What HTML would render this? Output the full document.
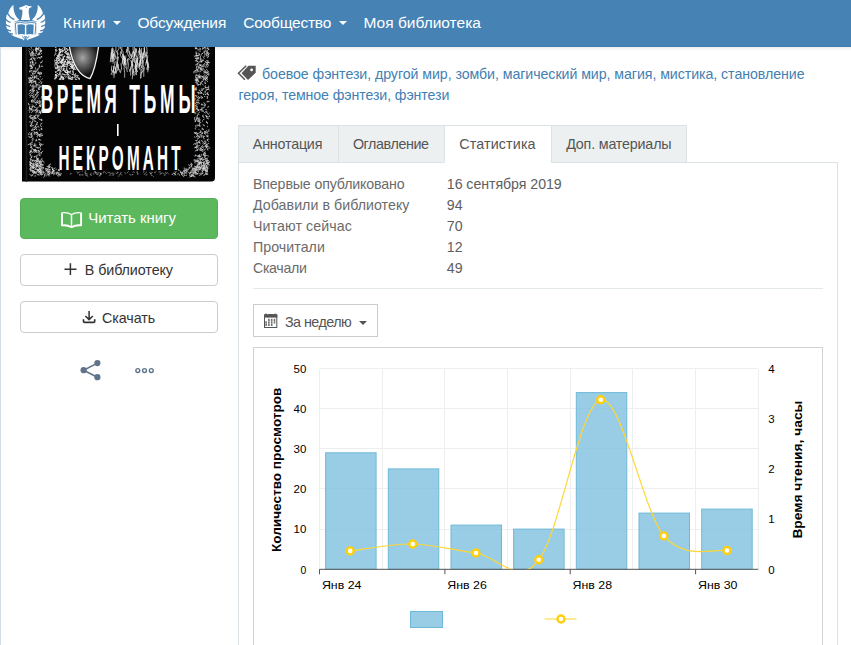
<!DOCTYPE html>
<html lang="ru">
<head>
<meta charset="utf-8">
<title>Статистика</title>
<style>
*{box-sizing:border-box;margin:0;padding:0}
html,body{width:851px;height:645px;overflow:hidden;background:#fff}
body{font-family:"Liberation Sans",sans-serif;font-size:14px;color:#555;position:relative}
.abs{position:absolute}
.t{position:absolute;white-space:nowrap;line-height:1}
#nav{left:0;top:0;width:851px;height:47px;background:#4682b4;border-bottom:1px solid #437dae}
#navsh{left:0;top:47px;width:851px;height:4px;background:linear-gradient(#efefef,#fff)}
#nav .t{color:#fff}
.caret{position:absolute;width:0;height:0;border-left:4px solid transparent;border-right:4px solid transparent;border-top:4px solid #fff}
#lborder{left:0;top:47px;width:1px;height:598px;background:#d5dde8}
.btn{position:absolute;left:20px;width:198px;border-radius:4px}
#read{top:198px;height:41px;background:#5cb85c;border:1px solid #54ad54}
#lib{top:254px;height:32px;background:#fff;border:1px solid #ccc}
#dl{top:301px;height:32px;background:#fff;border:1px solid #ccc}
.tab{position:absolute;top:125px;height:38px;background:#ecf0f1;border:1px solid #dce3e6;border-right:none}
.tab.act{background:#fff;border-bottom:1px solid #fff;border-right:1px solid #dce3e6}
#panel{left:238px;top:162px;width:600px;height:500px;border:1px solid #dce3e6;border-bottom:none}
#hr{left:253px;top:288px;width:570px;height:1px;background:#e3e8ea}
#period{left:253px;top:304px;width:125px;height:33px;border:1px solid #ccc;background:#fff}
#chartbox{left:253px;top:347px;width:570px;height:320px;border:1px solid #d3d3d3;background:#fff}
svg{position:absolute;overflow:visible}
svg text{font-family:"Liberation Sans",sans-serif}
</style>
</head>
<body>

<div id="nav" class="abs">
<svg class="abs" style="left:0;top:0" width="56" height="47" viewBox="0 0 56 47">
<g><path d="M13.5 4.8 C10.4 7.4 8.6 10.8 8.2 14 L6.9 14.4 C6.2 16.2 6 18 6.3 19.6 C5.8 21.2 5.8 23 6.2 24.6 C6 26.4 6.6 28.2 7.5 29.5 C7.9 31.2 8.9 32.6 10.2 33.4 C11.6 35.200000000000001 14 36.4 16 37 C18 37.8 20.5 38.6 22.5 39.2 L24.3 36 L15 34 L14.2 21.8 L19.4 19.9 C15.2 16.600000000000001 13 10.8 13.5 4.8Z" fill="#fff"/><path d="M7.6 13.6 Q10 17.8 14.4 19.6 M5.8 19.4 Q7.8 21.7 10.6 22.5 M5.6 24.6 Q7.6 26.1 10.1 26.6 M6.8 29.5 Q8.6 30.6 11 30.9 M9.4 33.3 Q11 34 12.9 34" stroke="#4682b4" stroke-width="1.3" fill="none" stroke-linecap="butt"/></g>
<g transform="translate(51.2 0) scale(-1 1)"><path d="M13.5 4.8 C10.4 7.4 8.6 10.8 8.2 14 L6.9 14.4 C6.2 16.2 6 18 6.3 19.6 C5.8 21.2 5.8 23 6.2 24.6 C6 26.4 6.6 28.2 7.5 29.5 C7.9 31.2 8.9 32.6 10.2 33.4 C11.6 35.200000000000001 14 36.4 16 37 C18 37.8 20.5 38.6 22.5 39.2 L24.3 36 L15 34 L14.2 21.8 L19.4 19.9 C15.2 16.600000000000001 13 10.8 13.5 4.8Z" fill="#fff"/><path d="M7.6 13.6 Q10 17.8 14.4 19.6 M5.8 19.4 Q7.8 21.7 10.6 22.5 M5.6 24.6 Q7.6 26.1 10.1 26.6 M6.8 29.5 Q8.6 30.6 11 30.9 M9.4 33.3 Q11 34 12.9 34" stroke="#4682b4" stroke-width="1.3" fill="none" stroke-linecap="butt"/></g>
<path d="M19 7.7 L23.3 6.3 L26 5 L28.6 6 L32.3 6.600000000000001 L29 8.6 C28.2 12 29 16 30.2 20 L21 20 C22.2 16 22.9 12 22.2 9.7 L19.8 9.5Z" fill="#fff"/>
<circle cx="26.3" cy="7.2" r="0.55" fill="#4682b4"/>
<path d="M14 21.9 Q20 20.6 25.6 21.8 Q31.2 20.6 37.2 21.9 L36.2 35.8 Q30.5 34.8 25.6 36.4 Q20.7 34.8 15 35.8Z" fill="#fff"/>
<path d="M15.3 23 Q20.5 21.9 25.6 23.1 Q30.7 21.9 35.9 23 L35.1 34.6 M16.1 34.6 L15.3 23" stroke="#4682b4" stroke-width="0.9" fill="none"/>
<path d="M17.5 24.8 Q21.5 23.8 24.9 24.9 V34.6 Q21.3 33.6 17.9 34.5Z M33.7 24.8 Q29.7 23.8 26.3 24.9 V34.6 Q29.9 33.6 33.3 34.5Z" fill="#4682b4"/>
<path d="M20.5 35 Q23.6 35.6 25.6 38.4 Q27.6 35.6 30.7 35 L31.2 36.8 Q28.4 37.8 27.8 40.6 Q26.4 38.6 25.6 38.6 Q24.8 38.6 23.4 40.6 Q22.8 37.8 20 36.8Z" fill="#fff"/>
<path d="M22.3 36.6 Q24.2 37.3 24.6 39 M28.9 36.6 Q27 37.3 26.6 39" stroke="#4682b4" stroke-width="0.9" fill="none" stroke-linecap="round"/>
</svg>
<span class="t" style="left:63px;top:15px;font-size:15.5px;letter-spacing:0.435px;">Книги</span>
<i class="caret" style="left:113px;top:21px"></i>
<span class="t" style="left:137.4px;top:15px;font-size:15.5px;letter-spacing:-0.131px;">Обсуждения</span>
<span class="t" style="left:243.2px;top:15px;font-size:15.5px;letter-spacing:-0.216px;">Сообщество</span>
<i class="caret" style="left:339px;top:21px"></i>
<span class="t" style="left:363.5px;top:15px;font-size:15.5px;letter-spacing:0.001px;">Моя библиотека</span>
</div>
<div id="navsh" class="abs"></div><div id="lborder" class="abs"></div>
<svg class="abs" style="left:0;top:0" width="851" height="645" viewBox="0 0 851 645">
<clipPath id="cc"><path d="M22 47h193v130.7q0 4 -4 4h-189z"/></clipPath>
<g clip-path="url(#cc)"><rect x="22" y="47" width="193" height="134.7" fill="#040404"/>
<rect x="25.6" y="46" width="1.8" height="136" fill="#1d1d1d"/>
<path d="M33.5 65.9q0.1 -0.5 0.6 -1.7M30.2 110.4q-1.7 -1.6 -1.9 -0.3M34.8 150.4q0.5 1.8 -1.5 -1.1M36.7 96.6q1.4 -0.8 1.9 -1.8M31.3 61.7q-1.3 0.3 -0.8 1.3M37.5 93.5q-1.8 -1.2 0.2 -1.7M38.0 100.4q-0.2 -0.8 -0.7 0.3M39.4 134.4q0.1 1.5 -1.0 0.3M38.6 83.0q-0.3 1.0 1.9 -1.5M31.4 108.1q1.1 0.3 -1.8 0.7M40.4 86.2q0.3 -0.2 0.8 0.4M40.0 165.1q-1.8 0.8 -0.1 0.7M37.6 171.1q-0.5 0.7 1.3 -0.9M29.8 104.7q-1.8 1.1 -1.3 -1.5M31.1 78.0q-1.7 -0.2 -0.4 1.5M36.4 157.4q-0.9 -0.3 1.3 1.5M34.0 157.5q-1.3 -1.1 1.8 -1.4M32.4 107.6q-2.0 -0.3 0.4 -0.9M34.1 117.8q0.1 0.5 1.8 0.8M38.0 53.7q1.5 1.2 1.6 1.1M34.4 96.9q-1.8 -1.7 -1.6 0.5M32.1 67.3q-2.0 -1.4 -0.6 -1.8M30.8 92.5q0.5 -1.4 -1.9 1.5M32.7 90.4q1.4 2.0 -0.5 -1.5M35.3 107.5q-0.6 -0.9 -1.7 -1.6M39.9 67.2q0.1 -1.4 -1.9 1.8M36.3 50.4q1.5 0.8 0.1 1.9M32.8 92.8q0.1 1.1 -1.3 1.1M33.6 74.9q1.4 1.2 1.2 1.9M39.7 139.5q-0.6 -1.9 -1.1 0.1M29.8 81.9q1.8 -0.2 -1.0 0.8M41.2 170.5q-1.1 -1.1 1.8 -0.5M32.0 72.5q1.4 -0.1 0.5 1.6M37.7 147.0q1.6 1.1 -1.7 0.6M38.9 106.8q-0.7 1.2 -1.3 1.2M41.6 96.5q0.9 -1.3 -0.4 1.8M31.1 65.9q-1.4 1.3 1.6 1.2M41.8 129.2q-1.5 -1.9 -0.6 0.2M41.6 128.2q-0.3 1.5 0.1 1.7M39.8 73.4q-1.0 0.3 -1.0 -0.8M32.7 99.4q-0.6 -0.2 -1.5 1.6M36.8 160.0q0.0 0.1 -0.3 1.7M36.0 49.3q-2.0 1.2 -0.2 -1.3M31.7 106.2q-0.7 0.1 0.9 0.2M36.4 145.0q-1.0 -0.9 -1.6 0.2M39.2 110.5q1.6 -0.2 0.2 1.0M37.2 110.2q-0.2 0.1 0.0 0.8M35.5 164.7q1.8 -1.0 0.8 1.5M36.5 164.9q-1.5 -0.2 1.4 -1.5M30.4 77.1q1.1 1.6 -1.7 0.7M31.4 136.5q1.5 1.9 0.6 -1.4M32.2 166.1q2.0 1.3 -0.4 -0.1M31.5 100.9q-1.2 -0.7 0.1 -0.6M38.5 49.4q-1.9 -0.7 0.2 -0.2M37.3 111.0q1.2 1.9 -1.7 1.9M30.8 80.2q-0.9 -1.5 -1.8 1.1M34.8 160.9q-1.4 1.7 1.3 -1.0M36.6 134.6q0.8 -0.3 -1.6 -1.8M30.4 164.3q-1.7 1.4 0.5 1.2M30.3 154.8q0.2 1.7 -0.2 -0.6M32.8 63.2q-1.6 -1.4 0.1 -1.0M30.1 72.2q1.0 -0.8 -0.8 -0.8M35.8 69.2q-1.0 -1.9 -0.6 -1.9M38.7 115.9q1.7 -1.6 -1.2 -0.1M39.7 101.0q-0.4 0.0 -0.0 1.3M38.1 169.8q0.8 0.5 -0.6 1.3M34.6 90.4q-1.7 1.0 -1.8 -1.5M32.7 67.4q1.5 0.7 -1.7 1.4M33.0 77.3q-1.4 -0.2 -0.8 -0.2M32.8 167.2q-1.0 1.9 1.9 0.2M33.4 91.6q-0.1 0.0 -2.0 -0.5M32.0 110.1q-1.6 -0.4 -2.0 -0.9M30.0 49.8q0.3 0.1 -0.8 -1.1M38.9 129.2q-0.4 -0.7 0.9 1.5M41.8 65.7q-1.8 1.3 0.9 0.6M40.6 125.4q-1.4 0.1 0.9 1.2M35.8 151.4q0.3 1.6 1.2 1.3M38.0 133.7q-1.5 -0.6 -1.1 -1.9M30.8 151.5q0.5 0.7 0.2 0.5M35.6 47.4q0.0 0.1 1.2 1.0M37.7 55.3q-1.7 -0.9 0.9 -1.0M38.6 72.7q-0.0 -0.5 1.0 1.9M35.5 132.5q0.6 -1.7 1.1 0.5M31.3 78.7q0.3 -2.0 1.0 -0.8M30.3 80.6q0.7 -0.8 0.7 0.8M36.0 105.1q1.6 -1.2 -0.1 -1.5M41.7 164.0q1.3 1.9 -1.9 -0.2M35.1 80.6q-1.2 0.3 -1.2 1.8M31.3 112.5q1.3 0.0 1.8 -1.5M40.6 134.9q-0.1 -1.9 -1.1 1.6M29.5 108.5q-1.4 -0.6 -0.2 -0.8M33.5 152.0q1.4 -1.5 -2.0 1.0M41.1 136.1q-0.5 -0.4 1.6 -0.8M42.0 120.6q-0.9 -1.8 -0.6 -0.3M30.8 151.3q-1.0 -0.9 -0.9 1.7M35.9 70.7q1.5 1.2 -0.5 1.8M37.4 161.2q0.9 -1.8 1.8 0.2M38.7 103.4q-0.9 -1.8 1.0 0.6M41.1 62.9q-0.8 1.0 -0.1 -0.6M41.7 79.5q0.2 -0.4 0.6 -0.8M31.6 67.2q-0.0 -1.1 -1.2 1.6M40.8 171.6q-1.2 -1.6 -0.2 -1.4M33.8 58.4q0.3 1.5 -1.0 -1.0M38.9 98.6q-0.5 -0.6 -0.3 0.1M30.3 81.7q0.0 0.5 1.9 -1.5M40.3 74.0q-0.4 -0.2 -0.9 -1.0M41.4 153.1q-1.9 0.8 1.5 -1.9M40.7 106.2q-0.4 1.7 0.3 -2.0M39.8 153.9q-1.6 -1.4 1.9 -1.0M36.0 132.3q0.6 1.1 1.8 0.9M35.2 115.9q-1.1 1.7 -1.8 1.1M37.6 85.0q0.5 0.8 -1.5 -1.0M30.9 55.8q-0.4 -1.1 0.1 0.3M37.0 48.3q1.8 0.6 -0.8 -0.2M40.5 106.4q1.8 0.8 -1.1 -1.0M33.3 49.7q-0.3 -1.0 -0.0 0.7M37.8 162.6q-0.6 -0.3 -1.1 -1.9M38.0 71.8q0.0 -1.2 1.2 1.0M41.6 86.0q-1.1 1.0 1.3 -1.1M33.2 166.0q-1.1 -0.3 -0.0 -1.3M37.8 165.6q-1.1 1.9 -1.4 -0.4M31.3 53.5q1.6 1.5 -1.8 -0.4M38.7 171.7q-1.3 1.7 1.7 -0.7M38.8 51.0q-0.5 -0.7 0.7 -0.5M31.6 47.4q1.8 -1.5 -0.9 -0.6M41.6 72.9q1.3 -0.3 -0.6 1.3M30.1 106.2q-1.2 -0.5 -0.5 1.7M40.7 50.8q1.1 -1.8 -0.4 1.2M29.9 54.8q1.0 1.6 1.7 -1.0M33.7 81.0q-1.0 0.9 1.8 0.5M33.5 81.5q1.7 0.5 -2.0 1.0M41.3 50.0q1.8 1.8 -1.1 -0.1M34.3 78.4q1.7 -1.3 -0.3 -0.0M39.5 139.3q0.4 -0.7 1.3 1.1M33.5 92.2q-1.2 1.0 1.1 -1.7M32.6 55.1q-0.7 1.9 -1.9 0.2M40.5 170.5q-1.6 -0.0 -0.9 -1.7M38.4 102.9q0.5 0.7 -1.1 -0.3M38.8 152.9q1.4 -0.8 0.7 -1.5M36.6 93.6q-1.0 -1.0 1.0 -1.2M31.4 157.5q-0.4 2.0 0.3 -0.7M35.8 75.9q2.0 -1.6 1.2 0.6M35.4 149.4q-1.8 -0.8 1.4 1.7M31.0 70.7q1.7 -0.5 1.9 0.3M40.3 103.1q1.8 -1.6 -1.0 1.1M37.0 124.5q-1.4 -1.2 -1.1 -0.5M32.7 121.9q-2.0 -0.7 0.6 -1.2M38.0 70.1q1.2 0.2 -0.8 -1.2M30.3 59.7q0.6 -1.6 -0.4 0.2M31.5 133.9q-0.8 1.8 -0.4 -0.9M33.4 117.8q1.5 2.0 -0.6 -0.3M34.0 71.7q-2.0 1.6 0.9 -1.2M34.8 149.5q-0.2 -1.3 -0.4 1.5M29.7 115.9q-1.6 0.5 0.6 1.6M34.1 110.1q0.1 1.7 -1.4 -0.9M30.9 108.3q-1.2 -1.5 1.2 1.9M41.3 168.9q1.7 -0.4 -0.1 -1.8M40.8 124.5q1.1 -1.1 1.3 -1.4M34.6 152.8q-1.1 -0.4 1.3 -1.3M36.0 94.9q0.9 1.6 -1.5 -1.0M30.0 117.3q1.4 -1.5 1.0 -1.8M37.0 115.8q-0.3 0.3 0.5 -0.8M34.8 129.4q-1.9 0.5 -0.2 -0.2M35.6 76.4q-0.2 -1.3 1.1 1.1M35.4 60.4q-1.6 -0.2 -1.5 -0.3M35.9 52.1q0.9 1.1 0.5 -1.7M35.9 53.8q1.8 -1.5 0.0 -0.5M40.2 171.5q-1.2 1.9 0.9 1.3M35.6 166.6q1.2 1.7 1.7 -1.3M30.3 90.9q1.6 -0.9 1.0 -1.4M39.7 64.9q-1.2 -0.9 0.0 1.7M35.8 86.9q-1.4 1.7 -1.9 -1.3M38.0 158.9q-1.5 0.1 -1.3 1.1M37.5 92.0q0.3 1.5 1.5 0.2M30.8 171.1q1.2 -0.9 0.5 -0.4M41.9 119.2q-0.2 -1.3 -0.6 1.1M38.8 53.0q0.6 1.9 1.3 -1.0M36.8 130.0q-1.9 -1.4 -0.7 -2.0M37.2 101.0q-1.5 -1.1 0.1 1.6M37.7 49.8q-1.6 -0.6 -2.0 -0.6M32.3 119.9q0.5 -0.1 0.4 -1.2M31.2 164.1q-1.6 0.6 -1.0 -1.4M40.4 144.8q-2.0 0.6 -0.4 -0.9M36.5 90.8q1.7 0.9 0.6 -0.2M32.6 159.9q-0.4 -1.0 -1.8 0.1M30.2 144.4q1.8 -1.4 -2.0 0.2M32.0 123.0q1.3 -1.3 0.0 0.6M33.4 84.5q1.1 0.9 -1.8 1.6M29.6 152.6q1.0 -0.2 1.0 -0.1M32.3 60.2q-0.7 1.0 -1.1 -1.8M38.2 152.7q0.2 -0.3 0.8 -0.9M39.4 112.4q1.9 -1.1 -0.9 0.6M40.5 48.9q1.0 1.8 -1.0 -1.1M38.8 87.9q-1.0 1.6 1.5 -0.7M37.4 133.6q-0.1 1.4 0.7 1.9M38.2 154.2q0.3 -0.8 -0.3 0.9M32.1 124.8q-1.4 -1.9 -1.7 1.6M30.8 163.1q-1.9 -1.8 -0.6 -1.4M38.2 126.2q-1.7 0.4 0.8 0.9M34.0 149.2q-1.7 1.5 1.3 1.6M40.9 165.0q-1.6 -1.9 -1.6 -1.2M40.1 148.5q0.5 -0.9 0.5 1.3M30.7 59.2q-0.7 -0.3 1.0 -1.2M29.8 79.1q-0.5 -0.7 -0.9 0.9M41.5 110.0q-1.9 -0.3 1.4 0.5M35.0 143.6q0.2 -1.1 -0.6 0.8M40.3 58.4q-2.0 -1.2 1.3 -1.3M39.0 169.2q-0.0 1.2 -2.0 -0.0M31.8 108.8q-1.0 1.8 -0.6 1.3M33.0 73.8q-1.6 0.5 0.8 -0.0M30.5 145.5q0.5 -0.6 0.8 1.1M34.5 96.3q1.6 -1.9 1.6 -1.7M32.1 79.9q-0.5 1.5 1.6 0.0M32.4 104.6q1.0 0.6 0.1 1.0M33.9 87.8q0.6 1.0 -1.4 1.4M31.6 101.8q-1.5 -0.2 1.1 0.3M40.6 76.7q0.8 1.4 -1.2 -0.8M31.4 66.5q0.1 -1.4 -1.0 -0.7M33.6 70.7q-1.6 1.8 1.9 0.9M30.8 95.0q0.9 -0.3 1.9 1.2M32.0 126.7q-0.4 -1.9 -1.6 -1.2M34.5 145.9q0.5 -0.1 0.8 0.0M31.3 122.5q1.6 -0.3 -0.4 1.0M36.7 140.6q0.9 1.5 -0.3 -1.1M39.2 134.5q0.6 -0.2 1.4 0.7M33.4 125.5q1.1 0.9 -1.6 -0.3M37.4 78.3q0.5 -0.4 -0.3 -0.2M37.9 163.3q1.1 -0.4 -1.3 0.6M35.6 168.8q-1.4 1.1 -1.8 0.2M41.3 111.9q0.2 0.9 -1.6 0.3M35.9 126.9q-0.4 1.8 1.3 0.1M32.1 132.5q-1.5 1.9 -0.4 1.1M33.9 54.1q-1.9 -0.3 -0.9 -0.4M34.8 134.3q-1.1 1.0 -0.6 -0.9M41.2 112.9q-0.4 -1.2 -1.1 1.2M31.1 144.1q-0.1 0.2 1.2 0.5M32.3 167.5q1.3 1.3 -0.6 0.6M35.4 83.8q1.3 -0.6 0.2 -1.5M40.1 80.4q-0.3 -1.3 -0.5 -1.0M29.5 137.2q-0.8 -0.1 -0.9 -1.0M34.9 126.7q1.7 1.4 0.6 -0.6M30.2 150.5q-1.4 1.3 1.6 1.1M37.4 48.9q0.6 -1.0 -2.0 1.8M30.8 64.8q-0.6 -1.4 -1.1 1.1M40.8 146.0q0.4 1.1 -1.3 1.6M37.9 158.7q-1.2 0.8 1.2 1.4M36.1 139.7q0.2 -0.9 -0.2 1.5M32.4 64.4q-0.1 -1.4 -0.0 -1.8M35.6 109.3q-2.0 1.4 0.2 1.5M35.3 117.3q-0.5 -0.3 0.7 1.4M41.5 56.4q-1.9 0.4 0.5 0.5M38.0 163.4q0.0 -0.1 -0.7 1.9M40.7 51.2q-0.6 1.4 0.9 0.5M34.1 106.3q-1.2 -0.3 0.1 1.1M34.8 116.3q1.3 -0.4 1.3 -0.8M35.8 81.0q0.6 1.2 0.0 1.9M33.6 86.6q0.5 1.1 -0.8 0.3M30.0 137.3q-1.8 -0.8 1.5 0.2M29.6 70.7q0.6 1.2 1.7 0.4M40.9 123.5q0.8 0.4 0.5 0.5M38.0 73.6q1.1 -1.6 0.7 -0.2M31.8 51.6q0.6 -0.5 1.1 1.7M39.8 145.3q-0.8 -0.3 0.2 -1.0M33.5 100.8q-1.8 0.3 0.6 1.7M30.0 61.9q1.7 -0.2 1.2 0.3M29.7 95.4q1.9 -0.1 0.4 1.8M34.7 59.8q-1.4 -1.9 0.6 -1.2M29.6 132.5q-1.6 1.5 -1.5 1.9M31.1 49.2q0.9 -1.3 0.9 -1.0M30.1 143.8q0.9 -1.7 0.9 1.4M37.4 135.7q-1.0 1.9 -0.2 1.7M38.5 48.4q1.3 -1.7 -1.9 0.6M33.4 138.2q-0.1 -1.8 -1.3 1.4M34.1 118.9q-1.4 1.2 -0.2 0.7M34.0 127.6q-0.5 1.1 0.5 -0.3M41.3 145.1q-1.8 1.9 0.3 -0.8M38.3 150.4q1.9 1.3 -0.7 0.4M37.0 85.6q-0.5 0.7 -0.3 1.6M37.0 159.0q-2.0 -0.9 1.2 -0.9M34.8 120.3q-1.8 1.3 1.3 1.5M39.6 155.4q1.4 1.2 0.3 -0.9M38.1 161.2q0.2 1.2 -0.6 -1.7M32.0 140.8q0.4 0.7 1.7 -1.1M35.3 72.8q1.2 -0.2 -1.0 1.0M30.6 147.8q0.3 1.6 1.1 -1.1M40.6 112.2q-1.2 -1.2 -0.1 0.4M31.8 134.6q-0.4 0.1 -0.5 0.3M31.4 52.6q-1.6 0.5 2.0 -0.5M39.3 66.5q0.1 -1.9 0.4 -0.6M29.9 170.8q0.3 -1.0 1.5 -0.1M39.2 100.2q1.3 1.9 1.8 1.1M32.7 51.7q-1.7 -1.8 -1.2 -1.3M36.5 155.8q1.6 -1.7 -0.2 1.8M37.0 96.7q-1.0 0.3 -1.5 1.8M37.5 166.6q-0.2 -1.4 0.7 -0.4M41.6 171.0q-1.0 -0.6 -1.1 -1.8M40.8 160.1q1.1 0.8 1.3 -1.8M37.6 170.2q1.0 1.8 -1.8 -1.4M38.0 84.3q-1.6 -0.7 0.4 1.0M32.7 62.5q-1.0 -1.4 -0.1 -1.3M38.0 48.6q-1.9 1.7 0.9 -1.2M32.3 163.7q-1.4 -0.2 1.5 1.6M30.7 163.1q-0.2 -0.6 1.4 0.5M39.8 106.7q-1.1 -1.8 0.5 -1.4M38.4 116.2q-0.9 -0.4 -1.4 1.5M31.4 80.9q-1.3 -0.0 1.4 -0.7M33.5 159.9q-1.8 1.6 -1.5 1.9M37.9 73.4q-1.0 -1.2 -0.1 -0.9M34.1 170.9q-1.6 -0.8 2.0 1.7M40.7 54.2q1.9 -1.9 0.9 -0.8M39.6 89.6q1.3 0.1 -1.4 -2.0M31.8 101.4q0.3 -1.4 1.6 -1.1M31.8 143.3q-1.7 -1.7 0.8 -1.2M37.1 108.9q0.4 0.8 -0.9 -1.2M39.6 119.9q0.9 -0.4 -1.2 -1.7M38.5 53.9q1.4 1.5 1.2 -0.7M35.7 48.9q1.5 -0.9 1.6 -0.1M31.8 151.0q-0.5 0.4 -0.5 -1.3M29.6 112.0q-1.5 0.9 -0.2 0.1M39.7 155.2q-0.5 1.0 -0.7 0.8M30.3 156.1q0.1 0.1 1.8 -0.0M36.2 49.6q-1.3 -1.6 1.9 -1.1M32.6 149.1q0.8 -1.2 -1.9 -1.6M29.7 121.9q0.8 -1.6 0.3 0.1M40.4 136.6q-0.0 0.0 -1.8 -1.5M33.0 62.3q0.4 1.4 -0.4 -1.5M31.3 118.6q1.3 1.8 1.0 -1.3M34.4 99.6q-0.4 1.8 1.4 0.1M39.2 89.3q-0.3 1.9 -1.0 -0.7M39.6 161.1q-1.8 0.1 1.3 1.4M41.5 163.8q0.5 -0.5 -1.0 -0.3M36.1 55.7q-1.9 -1.4 -0.3 0.0M41.6 144.1q1.2 1.5 1.7 0.5M40.6 51.3q0.7 -0.9 0.6 -0.9M36.3 162.5q0.1 -0.3 0.5 -1.0M41.4 82.9q-1.5 0.4 -0.8 0.6M41.5 111.2q0.1 -1.4 -0.9 -0.1M31.0 63.4q-0.8 -1.0 -0.8 -0.4M30.6 115.3q0.3 0.6 1.4 0.4M32.0 135.8q0.5 -0.1 -0.2 0.2M33.4 77.3q-0.5 0.3 -1.1 0.0M29.6 91.1q0.2 -0.0 1.4 -1.0M33.1 170.4q-1.4 -1.7 -0.8 1.1M40.4 102.0q-0.2 0.9 -1.8 -0.4M30.9 75.1q-1.4 -0.7 1.8 1.0M33.9 131.4q1.3 0.1 0.5 1.4M38.7 139.9q1.1 0.8 1.0 -0.1M40.9 62.9q1.1 0.3 1.5 -2.0M35.7 167.3q1.1 1.5 0.3 -0.3M37.1 94.4q0.9 -0.8 -0.2 -0.2M34.4 116.4q1.1 1.4 -0.5 -0.7M35.7 102.5q-1.4 0.3 -1.3 -0.8M36.8 58.0q1.4 1.4 1.7 -0.7M41.5 72.5q-2.0 -1.8 -0.3 1.6M36.6 109.2q0.2 2.0 1.7 1.1M36.0 111.7q-0.6 0.4 0.7 -0.4M33.9 165.5q-1.6 -0.5 0.7 0.1M34.5 117.2q1.9 -0.1 0.3 1.5M35.0 125.1q0.1 1.3 2.0 -0.6M31.6 86.8q0.1 -1.6 1.9 1.3M40.7 133.2q1.6 -0.3 1.3 2.0M31.5 83.2q-1.2 -1.3 0.0 0.0M37.4 122.4q0.5 -1.8 -0.6 2.0M34.6 145.5q-2.0 -0.8 -0.8 0.8M40.0 120.3q-0.0 0.2 0.7 -1.2M32.8 127.9q0.3 -0.4 0.1 2.0M31.0 66.6q-1.6 -1.3 1.0 -1.6M36.0 149.9q-1.8 -2.0 0.5 1.2M39.1 87.4q-1.3 -0.9 0.9 -0.6M30.7 160.0q-0.2 -0.5 0.3 -0.6M30.2 158.3q-0.2 0.5 0.3 1.8M32.6 52.5q-0.7 1.6 1.7 1.4M39.7 85.0q-0.0 1.8 0.4 1.8M32.5 95.7q-0.8 1.5 0.9 -1.1M35.6 146.1q-0.6 -1.3 -1.0 -1.3M41.6 83.3q0.1 -0.5 0.2 -1.5M34.5 55.2q-0.6 -1.0 -1.5 1.3M31.9 82.4q0.7 -0.6 -1.1 -1.9M31.4 135.2q1.3 -1.5 -1.6 -0.9M35.0 151.5q-0.6 0.9 1.2 -1.4M34.2 166.8q0.0 -1.1 -1.2 1.8M35.2 63.4q1.6 0.4 0.8 -1.0M34.1 77.8q1.5 -1.5 0.4 -1.1M35.9 114.8q-0.5 0.6 -0.9 1.1M36.6 85.8q-1.3 1.4 -0.4 -1.7M33.5 129.8q-0.6 0.0 -1.6 0.2M33.2 55.2q-1.5 0.9 -0.8 -1.1M33.0 97.4q1.5 1.4 1.6 1.1M31.2 81.6q0.7 -0.6 -1.9 0.7M34.7 129.4q1.4 -0.6 0.8 -1.0M37.4 69.7q0.9 0.9 -1.5 1.7M30.0 52.0q-0.8 -0.5 -1.4 -1.2M30.0 85.9q1.4 0.3 0.6 -1.3M38.5 78.8q-0.6 -2.0 -0.3 0.7M39.9 144.1q1.4 0.4 -0.9 -1.8M30.1 77.6q-1.2 1.7 -1.6 1.2M38.9 57.8q1.0 1.3 0.8 -0.4M33.0 58.2q1.7 0.8 1.8 -0.3M38.7 150.7q-1.8 0.8 0.5 -0.2M34.9 111.0q1.0 -1.8 1.7 -1.5M38.3 147.7q1.9 0.6 -1.0 0.2M36.3 78.2q-0.4 -1.2 -1.8 -0.6M33.4 64.1q-1.0 -1.0 0.8 0.7M35.9 102.6q-0.8 1.5 1.7 -0.6M31.3 117.4q0.2 1.0 -0.7 1.3M31.6 130.3q1.1 1.3 0.4 -0.2" stroke="#ddd" stroke-opacity="0.7" stroke-width="1" fill="none" stroke-linecap="round"/>
<path d="M196.5 83.2q-1.8 -0.9 -0.6 -1.2M197.7 134.7q-0.7 -0.1 -0.2 -1.5M199.9 68.0q2.0 1.0 -1.7 -2.0M196.1 136.6q-1.6 -0.0 1.9 0.3M200.9 70.7q1.7 0.6 0.2 -2.0M203.5 163.9q-1.0 -1.4 0.6 -1.0M195.4 143.8q-1.3 0.6 1.4 -0.8M206.4 162.8q1.3 1.0 -1.3 1.1M199.4 70.1q-0.5 0.2 1.3 -0.7M200.0 150.9q0.3 0.5 -1.0 -1.8M206.1 135.2q-0.0 -0.0 1.6 1.8M197.1 84.4q0.8 -1.3 0.3 -1.7M201.0 168.2q-0.2 -1.2 -1.6 -1.8M204.8 47.4q1.1 -0.3 1.4 1.4M198.8 129.7q-0.6 -0.2 0.1 -0.3M204.0 150.3q-0.8 -0.2 1.6 -1.3M202.6 90.5q-0.7 -0.2 -1.2 -1.7M208.1 160.6q1.8 0.5 1.5 1.9M206.0 54.5q-0.8 0.3 0.7 0.4M207.9 107.1q-0.6 1.5 0.6 -0.8M195.4 70.6q-1.7 0.6 0.7 -0.2M200.0 119.6q0.3 -0.4 -0.3 0.1M196.5 69.6q-1.6 1.4 1.6 0.2M198.4 58.9q-0.0 0.2 0.1 -1.0M198.1 118.6q0.4 -1.7 -1.5 0.1M200.5 56.2q0.2 0.9 -0.2 1.5M205.2 61.3q-1.6 1.3 2.0 0.9M200.3 68.4q1.1 -1.5 1.8 0.3M205.5 54.2q-1.9 0.4 -1.1 -0.5M197.9 84.5q1.6 0.5 0.8 -0.3M206.8 117.4q-1.3 1.0 1.7 1.5M199.6 142.5q-1.5 -0.5 0.7 1.3M205.0 165.5q0.4 -1.6 0.9 -1.8M202.4 147.4q0.7 -1.0 -1.5 1.7M197.6 102.8q-1.5 -1.9 1.4 0.3M196.5 147.1q-0.8 0.7 -1.3 0.2M200.1 65.0q0.8 1.2 1.5 0.2M207.8 48.7q0.0 1.5 -0.6 -1.4M205.8 51.4q0.7 -0.4 -1.3 1.3M201.4 66.8q1.5 0.4 1.4 -0.4M196.0 88.2q0.4 -1.8 -1.1 1.6M197.3 92.1q-0.4 -0.6 -0.1 0.3M195.1 119.4q-0.2 1.9 -0.7 -1.9M195.6 65.2q-0.9 0.0 0.7 -0.9M198.5 118.1q2.0 -1.9 0.1 1.8M202.6 143.4q0.5 0.5 1.5 1.1M199.9 82.2q1.8 0.7 1.2 1.5M199.1 142.4q0.5 -0.6 1.0 0.0M202.4 97.7q-0.7 2.0 -1.8 -0.7M201.5 92.9q-0.6 -1.5 -1.0 -1.1M195.1 155.9q0.3 -0.8 -0.2 -0.2M197.3 55.3q0.9 0.2 -0.8 -0.8M207.7 89.6q-1.7 -1.3 1.7 0.3M202.8 170.4q-0.3 1.5 -0.6 1.1M195.9 107.6q-1.0 -1.9 1.6 -0.9M197.2 80.5q-0.4 -1.2 0.8 -1.1M203.1 155.0q0.9 1.9 0.6 -1.2M203.1 56.9q-0.6 -1.5 1.2 1.5M197.5 114.1q1.7 -1.2 1.5 0.6M199.4 140.7q0.7 -0.6 0.6 -0.4M195.8 98.8q-0.7 -0.0 -1.8 0.5M203.1 79.1q1.7 0.3 -0.1 -1.9M208.3 54.0q-0.7 -1.6 0.5 0.9M197.1 64.8q1.3 -0.3 1.1 -1.6M202.3 120.6q0.4 -0.7 0.2 0.6M205.0 79.2q1.1 -0.8 0.8 1.1M205.4 169.2q0.1 1.8 -0.2 -0.9M196.8 48.1q1.1 -0.6 -0.1 0.6M208.4 75.5q-1.9 -1.5 1.0 -1.6M195.8 109.7q1.8 -0.5 0.2 -1.3M197.0 69.2q-1.4 -1.9 1.0 1.7M205.5 77.3q0.5 -0.6 1.9 -0.0M205.8 104.5q-1.6 0.9 -0.7 1.6M195.9 127.7q-1.8 0.3 -0.4 1.5M200.5 161.9q-1.1 -1.0 1.8 0.5M198.5 101.2q1.0 0.6 -1.1 -1.2M199.0 171.3q-1.4 1.5 -1.1 0.3M206.7 80.4q-0.9 -0.7 1.0 1.3M201.6 158.4q0.4 -0.2 -1.4 0.7M202.8 157.4q-0.6 1.1 -1.2 1.5M206.7 69.8q-0.8 -1.9 1.5 2.0M196.5 168.8q-1.4 0.9 -2.0 1.6M196.3 68.1q-0.6 1.7 0.7 -1.6M204.7 157.2q-1.1 1.2 1.9 -1.9M204.3 51.7q-0.3 -1.6 0.0 -1.1M195.3 170.8q-1.5 -0.1 -0.7 1.5M196.8 100.6q-1.4 1.0 -1.3 0.7M201.8 61.0q1.7 -0.6 -0.6 -0.0M197.9 167.9q-0.9 -1.3 1.5 0.9M198.6 55.6q-0.4 0.2 -1.8 0.0M199.9 48.3q0.2 0.2 0.8 0.6M204.3 169.8q-0.4 -0.7 1.5 0.9M200.7 168.6q-0.4 -1.4 -0.5 -0.5M208.5 47.7q-1.0 0.4 0.4 1.7M200.1 77.1q1.4 1.1 -1.2 -1.5M207.3 53.2q0.6 0.2 0.8 -0.7M199.3 168.5q1.4 0.0 -2.0 1.0M203.0 171.3q1.0 -0.5 -1.1 0.5M204.6 96.2q0.7 -0.7 0.1 0.5M203.5 114.9q-0.9 1.6 -1.1 0.5M201.4 137.2q-1.1 -1.4 0.1 -0.1M207.5 113.1q1.3 -1.0 0.1 0.1M197.3 149.7q1.3 1.6 -0.2 0.6M206.7 52.4q1.3 -1.5 -0.5 1.3M197.1 78.4q1.2 0.1 -1.6 -0.6M201.1 58.0q0.8 -0.2 -0.4 2.0M201.5 146.8q0.7 -0.5 1.0 -1.4M202.0 76.7q-0.5 -1.9 -0.5 -0.6M197.7 118.3q0.9 -0.9 -1.8 -1.3M199.4 77.2q0.5 1.4 1.3 -1.6M197.7 99.9q-0.5 -1.8 1.2 0.5M201.0 92.9q-0.4 0.6 0.9 -0.8M205.9 91.0q1.7 -1.2 -0.5 0.3M208.1 136.0q-0.7 -1.7 -0.5 0.7M205.2 94.4q1.6 1.0 0.1 -0.0M195.3 121.1q1.4 -0.3 -0.1 -0.2M201.4 158.3q0.0 1.3 -0.2 -0.0M204.1 139.6q0.7 0.2 -0.4 -1.8M205.4 143.2q-1.7 1.3 -1.5 -1.1M196.4 58.0q-1.8 0.7 1.0 0.3M204.6 107.3q-0.3 0.3 -1.8 0.8M208.5 149.1q-0.7 0.1 1.5 -1.4M195.1 170.6q-0.7 -1.0 -0.9 -1.0M206.6 116.5q-1.8 -0.8 0.0 -0.3M206.7 147.2q-1.2 -1.8 1.4 -1.0M202.2 93.7q0.3 -0.5 -0.1 -0.0M205.8 72.0q-1.8 -0.7 1.7 0.2M202.2 98.1q-0.9 1.2 0.3 -0.7M198.9 135.8q-0.2 1.7 1.2 0.4M201.0 156.8q0.6 -1.8 -1.8 -0.3M206.6 56.0q1.7 0.2 0.4 -1.3M205.8 109.3q-0.8 -1.2 0.7 0.7M206.3 65.2q-1.6 -1.6 1.7 -1.2M205.6 165.9q-1.0 1.6 -0.3 0.6M204.3 66.4q-1.8 1.3 -1.8 0.8M199.0 76.1q0.2 -1.4 0.3 -0.7M207.3 87.5q1.2 1.9 1.4 -1.4M200.3 51.1q-1.1 0.2 -0.5 0.6M196.3 105.1q0.7 -1.5 0.9 -0.3M206.2 62.3q1.8 0.1 1.7 2.0M198.9 90.5q1.7 -1.6 1.0 -0.0M201.5 155.0q-1.6 -1.4 0.4 0.2M198.7 158.6q1.7 -1.9 1.4 -1.1M203.1 167.9q0.6 -1.8 -0.6 1.8M199.5 103.2q-1.3 1.2 -1.0 1.0M199.0 55.7q0.2 1.2 0.2 -1.6M203.0 104.7q-1.6 0.6 -1.9 0.1M196.8 119.2q0.7 -1.3 -0.6 -0.5M197.3 164.7q1.5 -0.1 -0.7 1.4M197.0 58.8q-0.0 0.1 1.5 -1.5M196.6 105.5q0.0 -0.5 -1.3 0.1M197.7 97.5q-1.0 1.5 -1.2 -1.5M201.8 158.3q-0.0 1.2 -1.9 1.8M202.7 133.1q-1.4 -0.9 -1.1 1.0M195.4 96.2q1.6 -1.7 0.1 -0.8M202.8 76.2q0.8 -1.8 0.4 1.1M198.3 121.9q0.5 0.8 1.9 -1.8M206.0 89.8q1.7 -2.0 1.2 -0.2M207.7 98.5q-1.0 0.9 -0.4 -1.6M204.2 65.9q-1.2 -1.1 -0.6 -1.4M199.5 169.0q-0.1 -0.0 2.0 1.2M205.5 160.5q-1.2 0.5 1.0 0.5M206.4 145.3q-0.6 -1.4 -1.6 0.9M208.0 131.1q1.3 1.7 1.0 -1.5M207.2 140.1q0.4 -0.3 1.3 1.2M206.1 145.1q1.8 0.1 1.5 -0.8M207.8 61.5q-1.0 1.4 1.9 1.1M198.1 71.8q-0.0 1.6 -0.2 -1.1M204.3 135.8q1.2 0.7 -0.4 1.1M207.7 150.2q0.6 1.3 -0.4 -1.7M199.6 121.4q-2.0 -0.0 1.3 1.2M195.2 60.8q0.4 -0.2 1.2 -0.3M199.5 73.7q0.5 -0.8 -0.6 1.4M196.2 80.9q0.6 1.2 0.8 -0.2M196.6 132.4q-1.3 -0.9 -1.8 1.3M207.9 92.3q0.4 1.6 -1.1 1.6M200.3 109.5q2.0 -1.2 1.8 0.0M206.2 67.3q-1.3 1.8 0.1 -2.0M201.1 148.2q-1.6 0.2 -1.0 -0.6M206.6 111.2q1.6 0.7 -0.5 1.7M196.0 125.0q-0.6 0.6 -0.2 1.8M203.5 94.0q1.6 -0.0 0.1 0.7M199.9 169.0q0.7 0.2 -1.8 1.3M201.0 140.9q1.0 -1.9 1.6 0.9M199.4 64.1q-1.4 0.4 1.8 1.6M202.8 52.8q0.6 -0.9 -0.4 1.0M205.3 83.4q1.9 0.6 0.2 -0.3M205.9 131.6q0.8 0.8 -0.5 1.9M198.7 67.2q1.2 -0.6 0.3 1.3M196.9 111.5q1.0 -1.3 1.5 -1.4M199.2 53.7q1.9 1.8 -0.8 -0.5M197.5 85.7q-0.7 -0.2 1.8 -1.2M196.5 79.5q1.9 -0.9 -0.4 -0.5M197.8 160.6q0.5 1.1 -0.2 1.3M199.2 66.0q0.2 0.7 1.0 -0.1M205.2 81.4q0.1 -0.8 -0.5 1.7M203.5 79.5q1.3 0.3 1.1 -1.8M199.8 164.5q-1.7 0.2 -0.9 -1.0M205.2 131.8q-1.6 -0.8 -0.3 1.2M203.7 167.9q1.1 -0.4 0.5 0.8M207.7 139.8q1.2 -0.6 -0.6 -0.4M197.5 156.0q0.7 1.6 0.1 0.1M196.8 89.3q0.0 1.4 -1.7 -0.3M204.0 119.2q-0.9 1.4 -0.4 0.3M205.6 151.8q1.0 0.0 -1.4 0.7M207.1 159.4q0.6 1.5 1.0 1.3M196.8 135.0q-0.9 -1.7 0.8 0.4M203.1 150.0q-1.1 -1.6 -0.9 -1.1M204.1 168.9q0.8 -1.7 1.2 -0.6M206.3 87.6q-1.4 -0.9 -2.0 0.5M195.8 102.7q-1.8 1.3 0.2 1.2M196.5 75.1q-0.7 0.3 0.5 -0.6M197.9 146.2q1.2 0.1 -1.2 1.4M195.4 144.3q-0.3 -1.7 -1.9 0.0M203.5 137.6q0.0 0.4 0.3 -0.4M198.1 155.5q1.8 -0.7 2.0 1.2M208.3 55.9q-0.2 0.7 -0.1 -1.5M204.6 103.8q-0.4 -0.9 -0.6 -1.2M197.6 139.0q-1.2 0.8 0.1 -0.2M197.7 80.2q1.9 1.0 0.2 0.8M207.8 162.0q-1.7 -1.2 0.9 0.9M195.2 154.9q-0.9 -0.6 0.9 0.5M197.2 126.0q-1.8 -1.3 2.0 -0.8M199.8 159.4q-1.6 -1.6 1.2 -0.2M197.1 144.2q1.6 1.2 -0.1 2.0M201.4 149.7q0.3 0.0 -1.5 -1.6M197.8 78.5q0.8 1.8 -1.9 1.6M208.2 101.6q1.2 1.4 0.9 -0.5M196.8 48.6q-0.5 -2.0 -1.1 0.3M206.2 145.3q1.6 0.1 -0.1 -1.8M196.0 87.4q-0.1 0.6 0.5 1.5M197.8 77.4q-1.6 0.4 1.6 -0.5M196.7 72.0q0.5 0.8 -0.2 0.3M200.9 55.4q-0.1 -0.4 0.9 -1.8M204.1 136.2q0.8 -0.1 -1.0 0.6M196.9 160.6q-1.0 1.9 0.4 -1.7M198.1 96.0q0.5 1.0 1.2 1.3M195.5 58.7q-1.8 -1.8 1.9 1.2M198.2 163.3q1.7 0.6 -1.1 0.7M207.4 79.9q1.0 -1.6 -1.4 -1.9M208.1 135.7q-1.3 0.0 -1.3 1.2M196.4 145.4q-2.0 1.4 1.6 1.7M202.5 149.7q0.4 1.2 0.0 0.5M196.0 53.8q-0.4 -2.0 0.2 -0.8M205.1 50.0q-0.2 -1.5 1.3 1.2M203.8 72.9q1.9 0.2 -0.3 -1.6M199.8 58.8q1.4 -1.6 0.9 1.4M200.0 84.8q0.4 1.9 1.0 -1.4M205.4 47.9q0.8 0.4 -1.7 -1.5M202.0 104.0q0.6 1.7 -0.4 0.4M204.9 146.6q0.9 -1.9 1.7 1.3M204.2 153.2q-1.3 1.8 -0.3 1.5M201.0 135.3q-0.6 -0.7 -1.0 -0.8M196.3 102.4q1.7 1.0 1.9 0.6M206.3 171.3q-1.0 -0.4 1.0 -0.9M195.3 75.8q-0.7 1.1 1.5 1.7M205.5 158.2q-1.6 1.3 1.2 0.1M199.2 125.4q1.9 -1.4 -0.5 0.1M202.2 128.2q-0.4 1.7 0.2 1.8M204.3 167.9q-0.9 1.6 -1.6 -1.2M195.2 79.5q-1.3 -0.2 0.9 2.0M204.3 133.3q-1.0 -1.0 1.0 1.0M195.4 133.4q1.9 0.6 -1.2 -1.0M203.0 129.0q-0.8 -1.7 0.4 0.8M195.9 48.8q-1.5 -0.0 -0.6 -1.4M208.1 132.9q-1.3 -1.6 -0.9 1.1M199.1 98.1q0.9 -1.6 0.8 -0.2M207.6 89.8q1.3 -1.1 1.3 -1.9M206.5 147.4q-2.0 -1.2 0.7 -0.9M207.2 66.8q0.6 -1.3 0.6 0.3M196.9 59.1q0.6 0.3 1.9 -0.5M198.0 55.1q-1.5 1.9 -1.9 1.4M199.9 137.3q-1.0 -0.5 -1.4 1.2M202.1 60.9q-0.9 -0.5 -1.0 1.2M205.3 75.0q-0.5 -0.5 -1.2 -1.1M203.7 106.0q0.7 1.3 1.5 -1.8M198.2 50.7q-0.2 0.8 -0.2 -1.5M196.3 61.7q-1.1 -0.2 -0.1 -1.3M196.6 55.5q1.7 0.2 -0.6 -0.1M196.0 74.8q1.5 1.8 1.0 0.3M206.6 60.8q-1.0 -1.3 1.8 0.1M206.7 73.5q1.7 -0.2 -1.7 -0.9M204.9 56.3q-1.2 0.7 -0.2 -0.7M199.9 62.0q-1.3 -2.0 1.9 -0.1M203.8 111.3q1.0 0.1 -1.9 -0.1M198.2 109.4q-1.4 1.2 0.4 0.6M207.8 139.5q1.6 -1.3 1.4 -0.5M198.1 121.7q-1.1 -1.9 1.6 -1.7M200.9 64.6q0.3 1.8 -1.2 1.0M200.4 131.9q-1.1 -0.1 -1.9 1.8M201.9 165.5q0.5 -1.1 -0.0 2.0M206.3 72.2q-1.1 1.8 2.0 -0.2M199.3 97.9q-1.9 -0.5 -0.6 0.7M197.2 150.5q-1.0 -0.2 -2.0 0.4M202.6 136.0q-1.5 1.8 -1.4 -1.0M197.0 64.1q1.5 -1.8 0.1 0.3M198.2 67.9q-0.4 1.6 0.3 -0.2M203.9 154.5q1.8 -0.4 1.8 -0.9M195.7 161.3q-0.8 -0.8 -1.6 -1.9M208.1 155.8q1.4 1.2 -0.3 0.1M203.8 111.1q0.6 0.3 -1.5 -1.0M205.8 159.3q-1.7 1.6 1.8 -1.2M202.7 69.7q-1.1 -0.5 0.8 -1.0M202.1 131.7q0.5 -0.1 -1.7 1.0M204.1 146.9q0.7 0.8 -2.0 -0.1M203.7 69.5q-1.1 -0.3 1.8 1.1M207.9 72.9q1.6 -1.1 -0.4 1.8M204.9 92.0q-1.5 -1.1 0.7 1.1M197.9 80.3q-0.4 -0.3 -1.9 -1.5M196.1 119.8q-0.6 0.8 1.8 0.3M200.9 68.9q0.7 -1.4 -0.1 -1.9M200.0 167.3q0.6 0.5 1.1 1.3M204.5 167.8q-0.8 -1.0 -1.2 1.1M206.1 122.1q0.4 -1.2 1.4 1.5M195.2 113.9q-1.7 -2.0 0.9 -0.9M197.3 134.0q-0.9 0.8 -2.0 -1.1M208.3 49.4q1.9 -1.4 -1.5 1.7M199.5 112.3q-0.1 -1.0 -0.7 -0.3M195.7 57.5q0.5 0.8 -1.4 -1.6M198.5 146.0q-0.0 -1.2 0.9 -0.6M207.5 117.0q0.8 -0.5 -1.8 -1.4M204.7 75.7q-1.6 0.3 1.2 1.2M197.6 135.5q-1.1 -1.6 1.2 1.2M204.0 117.6q0.3 -1.6 -1.4 -1.2M203.6 77.1q0.1 0.9 -1.0 -0.3M195.4 137.5q0.6 0.8 -1.1 -0.8M203.3 159.7q0.7 -1.0 -1.2 -0.8M197.1 75.3q0.9 1.8 1.1 1.3M205.7 85.7q-1.8 0.4 -0.7 0.9M196.2 53.1q1.7 1.5 0.1 -1.4M201.2 71.7q0.1 -0.5 -1.5 0.0M204.7 113.2q-1.7 -0.5 1.1 -1.6M201.5 78.6q-0.7 -0.1 0.7 -1.1M204.6 143.3q1.7 1.7 -0.5 -0.2M203.4 60.1q-0.9 -1.9 -0.2 0.5M208.2 160.7q0.5 -0.8 -1.5 -0.1M195.9 140.8q-1.7 -0.4 1.1 -0.3M196.3 167.4q1.1 -1.5 -1.8 -0.8M196.4 55.8q1.3 -1.3 -1.3 0.1M197.3 142.6q-1.5 -1.0 -0.3 -0.6M208.1 61.6q1.6 1.6 -1.0 1.0M201.4 166.5q-0.1 0.9 0.4 -0.8M204.9 63.2q-1.6 1.3 -1.2 1.8M199.6 78.0q2.0 -1.4 -1.0 -0.1M206.5 87.2q-0.6 -1.2 -1.3 1.0M200.6 149.7q-2.0 1.1 1.5 0.3M203.2 159.4q1.4 1.3 1.8 -0.7M198.6 92.7q-0.5 -1.6 -0.5 -0.6M198.1 160.7q1.5 1.0 -0.4 0.5M198.3 161.9q0.9 1.0 1.2 2.0M206.0 78.7q1.4 -1.5 0.6 -0.5M202.3 89.1q1.4 1.4 1.3 -0.6M206.9 64.4q0.7 0.6 1.8 1.0M195.6 155.8q-0.6 1.1 0.2 -0.2M205.6 155.7q-1.0 -1.6 -1.1 -0.6M199.4 50.2q-1.7 -1.7 1.2 -1.1M205.0 71.8q1.2 1.8 -0.2 -0.4M199.2 126.0q1.6 0.9 1.6 -0.1M199.2 156.2q0.3 1.3 0.3 -1.6M202.0 107.5q0.7 -1.2 -0.3 1.5M199.9 92.4q-1.5 1.7 1.8 0.8M195.5 120.9q-0.3 -1.6 -0.3 0.9M202.1 149.6q-1.1 1.0 1.2 -0.6M205.8 74.4q-0.3 -0.5 1.5 2.0M204.6 163.2q-0.7 0.9 -1.2 -0.8M197.5 115.4q-1.4 1.8 0.0 0.7M208.5 117.1q1.6 0.2 1.2 -1.3M205.3 155.6q-1.2 -1.9 -0.6 1.7M201.8 159.3q0.0 1.7 1.6 1.8M202.6 65.0q-0.3 0.4 0.5 1.2M198.5 81.5q-0.1 -1.6 -0.3 0.1M195.1 89.5q-1.1 -1.0 0.9 1.0M202.0 68.9q-1.2 0.3 0.4 1.6M204.7 140.7q-0.9 1.4 0.8 0.8M207.5 53.6q-1.7 -1.7 1.8 -0.2M205.8 131.7q0.6 2.0 -1.4 -0.2M199.5 142.8q-1.4 -0.4 -1.0 -1.2M203.3 84.9q-1.7 -1.2 -1.4 -1.1M199.3 110.1q-0.2 1.9 -1.3 -0.1M201.6 165.1q0.4 -1.4 -0.1 -1.2M197.3 56.2q-0.4 -0.6 0.8 1.9M200.7 91.0q-1.4 1.5 0.8 -0.4M202.7 47.8q-0.6 0.5 1.4 0.9M207.4 97.2q0.2 0.7 -0.3 -0.8M204.9 165.7q1.4 1.2 -1.4 -0.5M203.0 131.7q0.2 -0.4 -0.6 1.8M197.5 61.4q-1.9 -0.7 1.6 1.2M201.5 109.0q-0.6 0.1 -0.5 1.6M207.5 126.9q-0.5 0.4 -0.1 -0.7M205.6 79.6q-0.5 1.7 -0.5 -0.4M202.3 81.5q-1.4 0.8 -0.7 1.3M195.3 71.1q-1.4 -1.1 -1.8 1.2M195.8 80.0q1.6 1.8 0.9 0.9M202.4 162.2q-0.3 -1.2 -1.6 1.7M205.1 154.3q1.5 1.0 -0.5 -1.6M203.1 169.1q-1.5 -1.9 -1.8 -1.8M204.6 125.8q-1.3 0.4 -1.6 -1.4M204.1 168.2q-0.3 -0.4 -0.6 1.9M198.4 76.1q0.8 -1.3 1.9 2.0M197.4 66.0q-1.8 0.1 -0.6 0.9M204.2 51.2q0.3 -0.2 -0.2 1.2M206.9 122.1q1.8 1.4 -0.7 -0.4M207.4 117.1q-0.5 0.8 -1.4 -1.3M195.1 147.3q-2.0 1.2 1.1 0.1M200.6 130.7q-0.4 1.8 0.3 0.9M207.9 163.1q-0.5 -0.9 0.5 -0.7M207.2 146.0q2.0 0.8 1.2 1.3M199.3 141.7q-1.4 1.4 -1.0 0.4M201.6 81.4q1.7 1.0 1.7 -1.7M197.0 142.1q0.3 -0.3 0.3 1.6M207.6 57.9q-0.9 -1.5 1.1 -1.6M206.8 102.2q0.9 0.6 0.9 -1.0M196.3 108.7q0.6 -0.9 0.9 -1.1M200.0 162.0q-0.3 0.3 1.8 2.0M205.9 141.8q-0.4 1.8 -0.2 1.5M201.4 61.8q0.7 -1.8 1.0 -1.4M208.3 114.6q0.5 -0.5 1.0 -1.5M198.4 148.9q-1.7 1.4 -1.9 -0.1M207.1 51.3q0.9 0.9 -0.1 -0.1M199.6 163.6q1.3 -1.5 -1.3 -1.5M197.5 109.5q1.7 -0.1 -0.7 -1.3M205.6 78.3q1.6 0.5 1.7 -1.1M208.1 143.4q1.4 -0.2 0.5 0.1M196.3 161.2q1.0 -1.1 1.2 0.7M201.3 149.9q-1.4 0.7 1.8 1.7M202.5 97.6q-0.1 -0.0 -1.3 -1.5M198.6 93.0q0.4 -1.4 0.2 1.0M207.0 93.0q-1.4 0.3 1.8 1.9M208.1 95.1q-1.9 -1.2 0.2 -0.7M196.7 82.5q1.8 0.7 0.5 0.3M199.9 165.7q1.5 0.7 0.5 0.2M199.9 122.6q-1.0 1.9 -0.8 1.9M195.9 48.2q0.0 -1.5 0.2 -1.2M206.3 130.6q2.0 0.7 0.7 1.7M204.6 47.2q1.9 -0.7 -1.8 -0.3M202.7 48.1q0.4 1.3 -0.3 1.6M195.2 72.3q-1.6 1.7 -1.3 1.3M198.6 157.1q1.9 -0.4 0.1 -0.7" stroke="#ddd" stroke-opacity="0.7" stroke-width="1" fill="none" stroke-linecap="round"/>
<path d="M150.0 171.8q-1.6 1.0 1.3 1.9M85.1 172.1q1.8 2.0 -0.5 0.6M195.0 174.0q0.9 0.2 0.6 -1.4M98.6 175.1q-1.4 -1.4 -1.0 -1.4M133.5 174.7q0.3 0.2 -1.4 0.0M106.7 173.7q-0.3 -1.1 -1.9 -1.8M159.0 172.5q-1.6 -0.1 1.3 -1.0M102.9 172.8q0.7 1.3 1.1 -1.1M112.8 173.5q-1.3 -1.7 1.7 0.4M56.5 172.8q-0.3 -0.8 -1.6 0.6M121.8 175.2q-0.8 -0.7 -1.0 -1.4M182.3 174.3q-1.8 -1.5 -0.3 -1.3M172.8 174.1q-1.8 0.0 -1.4 0.5M95.0 171.9q0.0 -1.3 1.0 0.9M145.8 173.2q1.6 -2.0 0.6 -1.6M77.9 173.1q0.7 2.0 -1.2 -1.6M94.9 172.6q-0.4 0.8 0.7 -1.1M109.5 172.1q2.0 1.7 -1.7 0.2M59.2 173.5q0.7 -0.0 -0.0 -1.2M166.9 172.7q-0.1 -1.4 1.7 1.3M117.5 172.0q0.3 1.9 0.7 0.8M50.9 174.4q-0.7 -1.8 1.2 -1.5M132.6 174.4q-0.5 0.8 -0.6 0.8M86.1 175.4q-1.6 0.9 -0.2 -2.0M175.4 174.0q0.9 -1.5 -1.4 1.5M101.8 174.2q-0.6 1.5 -2.0 -1.8M195.4 172.8q1.5 0.4 1.6 1.1M191.3 174.1q-1.2 0.1 1.8 0.3M117.4 172.8q0.4 -1.1 -0.5 0.0M86.2 173.5q0.7 -1.3 0.0 -0.3M124.8 172.6q1.1 0.1 1.1 0.8M81.8 175.2q-0.8 -0.4 0.0 -0.5M151.7 174.8q-1.1 -0.2 -0.1 0.9M98.4 172.7q0.9 -1.2 -0.6 1.0M79.5 174.6q0.5 0.8 0.6 0.7M85.5 171.7q1.8 0.1 -0.6 -1.9M145.9 175.4q-0.7 -1.6 1.2 -1.1M164.9 174.4q-0.9 -0.1 -0.0 -0.5M152.2 175.1q-0.2 -0.3 1.4 1.5M91.7 175.4q-0.9 1.7 -1.3 -1.4M173.6 172.8q-0.3 -1.2 1.4 1.6M161.5 173.0q-0.2 -0.4 -1.5 1.6M134.5 172.5q-0.5 -2.0 -1.9 -0.4M100.5 174.5q0.5 -1.2 -0.7 0.7M47.1 174.2q-1.2 1.4 0.4 -0.8M182.2 172.4q-0.7 -1.9 0.3 0.3M93.5 174.1q-1.5 -1.1 0.4 0.0M91.3 173.2q-1.5 1.9 -0.5 1.6M80.5 174.9q-0.5 -1.8 -1.0 0.3M165.1 174.7q-0.1 1.9 -0.9 1.1M52.3 173.0q1.1 1.4 -1.1 0.5M127.3 173.0q-1.0 1.0 1.2 -1.6M110.9 175.5q-1.1 -2.0 -1.6 -0.2M58.2 171.9q0.0 -0.8 -0.5 -0.3M150.7 173.6q0.0 -0.0 1.9 -1.3M100.5 174.9q-0.6 -0.7 -1.2 1.5M137.5 173.8q1.8 -0.5 -0.9 -1.7M61.4 174.1q-0.7 1.4 0.1 -0.7M95.5 173.2q-0.4 -1.4 1.8 -0.6M144.7 174.2q-1.1 1.2 -0.2 -0.4M113.5 174.8q-1.9 -1.1 -0.5 0.9M190.0 174.2q-0.1 -1.2 0.7 -0.0M70.3 174.1q0.6 -1.5 0.8 -1.0M137.2 172.2q0.2 -1.5 0.0 -0.7M117.5 174.0q0.7 0.2 -1.5 -0.8M137.7 174.6q-0.2 1.3 0.3 -1.1M130.1 174.5q1.9 1.3 -0.5 -0.2M143.2 171.9q1.7 1.9 0.4 -1.9M154.7 172.6q1.3 0.1 1.4 -1.3M46.4 175.1q0.8 0.1 -0.2 1.3M175.1 172.3q-1.9 -0.7 1.6 -0.6M54.0 171.8q-1.4 -0.8 0.5 -1.5M86.4 175.2q2.0 -0.2 1.6 1.5M165.0 172.6q0.9 -1.1 1.7 1.2M57.9 175.2q1.4 -1.4 0.2 0.4M150.3 173.4q-1.2 1.8 1.1 -0.2M86.7 174.5q0.8 -0.4 1.3 -1.0M78.1 172.4q0.0 0.0 1.8 -0.5M48.0 174.5q-0.6 -1.2 1.0 1.5M96.8 174.4q0.1 -1.4 0.6 -0.4M183.6 173.4q-1.2 0.9 0.0 1.1M97.7 174.7q0.5 -0.1 -1.6 -0.9M101.3 173.8q-2.0 1.2 -1.1 -0.3M82.6 174.8q0.5 -1.5 0.2 0.4M162.1 172.7q0.7 1.3 1.5 1.1M110.4 174.2q-1.6 -0.4 1.8 -1.2M121.5 172.1q-0.4 -1.4 -1.1 1.5M71.8 173.8q0.2 -0.2 -1.2 -0.1M120.6 174.8q-1.2 -1.8 -1.9 1.7M160.7 173.8q1.1 -0.8 0.2 -1.1M154.5 172.4q-0.5 -0.1 0.3 0.6M53.9 174.1q0.2 0.9 0.8 -1.4M59.4 174.9q-1.0 -1.7 1.5 -1.8M82.4 171.8q-0.8 -0.2 -0.0 -1.0M100.5 174.7q-1.1 -2.0 0.9 -1.5M94.1 171.9q2.0 -1.2 0.8 1.1M49.6 174.5q-0.4 -0.8 -0.4 1.7" stroke="#ccc" stroke-opacity="0.45" stroke-width="1" fill="none" stroke-linecap="round"/>
<path d="M31.0 163.5q-0.3 1.1 0.0 -0.2M41.6 162.0q1.6 -0.4 -1.3 -0.4M39.3 162.3q-1.0 0.2 -0.2 0.3M42.1 160.8q1.9 -1.9 -0.5 1.5M38.8 162.5q-1.5 -0.8 1.4 -0.1M40.0 162.8q0.6 0.6 -1.2 0.6M30.3 161.9q-0.7 -1.5 -0.7 0.4M39.4 161.4q0.2 1.2 1.2 -0.8M31.6 162.8q-1.9 0.9 -1.7 1.7M35.2 161.1q-0.3 -1.5 -0.4 0.0M37.3 161.5q-0.3 -1.1 1.9 -0.5M43.6 161.5q-0.4 1.0 0.6 1.3M33.9 160.9q1.5 -1.2 -1.8 -0.2" stroke="#ddd" stroke-opacity="0.7" stroke-width="1" fill="none" stroke-linecap="round"/>
<path d="M200.2 162.9q0.1 -0.3 -0.9 -1.4M207.1 163.4q-0.3 -1.9 -1.0 0.2M200.2 163.4q0.8 -1.7 -0.8 0.3M206.9 160.8q-1.9 -0.5 -0.8 0.9M195.8 162.0q-1.1 -1.7 -1.9 -1.4M195.3 161.1q1.3 -0.3 0.1 -1.5M197.5 161.3q1.0 -1.6 1.4 -1.8M207.2 161.8q-1.6 -1.7 0.4 1.5M203.7 162.4q-0.0 -1.3 0.9 -0.9M200.1 161.4q-0.9 0.6 0.3 -0.8M195.2 163.1q-1.5 0.0 -0.0 -1.1M201.1 162.8q1.6 -0.9 -0.5 -0.4M207.7 163.4q-1.0 1.3 2.0 1.8" stroke="#ddd" stroke-opacity="0.7" stroke-width="1" fill="none" stroke-linecap="round"/>
<path d="M41.7 164.2q1.2 0.2 2.0 0.6M31.5 166.3q0.5 -1.2 -1.3 -1.0M38.9 165.8q-1.6 -0.1 -1.6 0.6M42.5 165.7q1.8 -0.4 -1.8 -1.2M38.2 164.7q0.6 -0.4 0.8 1.0M40.9 165.1q1.9 1.1 -1.2 1.8M49.1 165.0q1.0 0.9 1.4 -1.0M48.0 166.2q1.1 -0.1 1.5 -0.9M36.0 164.7q1.4 0.7 1.2 1.4M33.3 164.0q-0.7 -1.6 0.3 -1.2M33.0 165.8q-0.7 1.4 -1.1 1.4M35.8 164.4q-0.3 -0.5 -0.4 -2.0M30.2 166.3q1.8 -1.1 -0.5 -2.0M34.9 163.6q0.3 0.0 -1.6 0.8M34.7 164.4q2.0 1.5 1.9 -0.5M32.4 166.2q1.2 0.8 -1.9 0.8M40.6 166.1q-0.9 -0.4 -1.4 0.2M33.7 165.8q0.5 0.4 0.3 1.1" stroke="#ddd" stroke-opacity="0.7" stroke-width="1" fill="none" stroke-linecap="round"/>
<path d="M206.5 166.1q1.7 -0.5 0.3 -0.7M190.8 164.6q0.6 0.7 0.8 1.7M206.8 166.0q1.0 -0.7 -0.2 -0.2M190.9 165.5q0.7 1.6 1.2 -1.0M191.3 163.9q1.8 2.0 -0.0 -0.7M197.4 166.0q1.9 -1.3 0.5 -1.3M190.3 164.9q-0.4 1.8 -1.9 -0.1M196.7 166.2q-1.0 -0.8 1.1 0.3M198.2 164.8q-0.7 0.4 0.6 0.0M207.9 164.1q-1.6 -1.8 -0.7 -2.0M196.9 166.2q1.3 0.3 0.8 1.9M199.9 163.5q0.5 -1.7 -0.5 -1.0M199.2 164.7q-1.6 0.9 -0.0 -0.4M204.2 165.4q1.5 1.9 -1.5 0.4M203.4 163.6q-0.9 1.7 1.5 0.7M204.7 166.4q-0.5 -0.8 -1.0 0.3M203.4 165.5q1.7 0.3 -0.7 0.2M206.3 165.3q-0.2 0.2 2.0 -1.9" stroke="#ddd" stroke-opacity="0.7" stroke-width="1" fill="none" stroke-linecap="round"/>
<path d="M47.7 169.6q0.5 0.1 0.5 -0.1M47.2 169.5q1.5 -1.8 -1.9 -0.7M49.3 166.6q-1.0 -0.5 0.6 1.2M35.5 168.8q-0.7 0.3 0.1 0.4M53.3 169.0q0.1 -0.5 1.8 -1.0M38.4 169.1q1.1 1.7 -1.3 0.2M30.5 167.4q-1.3 1.4 -0.0 1.7M39.7 168.3q-0.7 -1.4 1.7 -1.7M33.3 167.5q-1.5 1.2 0.8 0.3M42.4 167.0q-1.1 1.8 1.3 1.3M49.8 167.2q1.3 -1.6 -2.0 1.5M48.7 169.0q1.9 -0.7 0.5 1.3M50.3 169.4q0.7 1.4 -0.7 0.7M43.8 167.4q-1.5 1.4 -1.0 0.2M51.7 167.3q-1.5 1.1 0.8 0.7M48.7 167.5q1.1 -0.1 -1.6 -0.9M49.9 167.0q1.5 -1.4 -1.6 -0.6M31.8 168.9q-1.7 -1.0 -1.6 0.7M46.2 169.3q-1.9 -0.6 -0.4 -0.2M35.9 169.0q0.1 0.8 0.9 1.1M33.1 167.7q1.0 -1.1 -0.8 -0.9M37.9 167.4q-0.1 -0.5 1.5 0.6M52.5 169.5q1.5 -1.0 -0.2 0.3" stroke="#ddd" stroke-opacity="0.7" stroke-width="1" fill="none" stroke-linecap="round"/>
<path d="M189.9 166.8q-1.4 -0.3 0.0 1.1M207.8 168.0q1.6 -0.5 -0.5 1.4M186.6 168.5q0.6 -0.8 1.0 1.7M196.2 167.4q1.6 1.6 -0.2 -0.1M206.2 168.0q1.7 0.6 1.9 -1.4M204.9 167.8q1.4 1.3 2.0 -1.9M192.7 169.2q-0.1 -0.4 -1.1 1.0M188.4 169.1q1.9 -1.1 0.9 -1.6M192.8 167.8q1.8 0.5 0.3 1.6M192.5 166.8q0.3 -0.2 -1.7 0.1M207.6 167.8q-1.3 1.8 -0.6 -0.3M198.0 168.2q-0.7 -0.0 -0.3 -1.0M194.5 169.6q-1.8 -1.4 0.3 -1.2M192.0 169.0q1.1 -0.2 1.6 -1.1M196.7 168.2q0.7 0.8 -1.8 -1.7M192.9 169.4q-1.7 0.2 1.3 -0.8M199.6 167.2q-1.9 0.9 -1.8 -0.1M198.9 167.4q-1.3 -1.3 -0.2 -1.1M203.5 168.0q1.2 0.4 0.9 -0.6M199.6 167.8q1.9 0.7 0.2 -1.2M196.6 168.5q-1.1 1.4 -1.6 -0.7M183.9 167.9q0.9 -0.8 1.5 1.1M189.3 168.8q-0.6 1.0 -0.8 0.9" stroke="#ddd" stroke-opacity="0.7" stroke-width="1" fill="none" stroke-linecap="round"/>
<path d="M47.0 172.1q1.9 -2.0 1.9 -0.5M56.0 169.6q1.1 -0.7 0.2 -0.4M36.2 172.0q-0.0 -1.9 0.2 1.0M52.8 170.2q-1.0 0.7 -0.1 -2.0M52.6 171.5q0.7 -1.2 -0.2 0.9M45.8 171.4q-0.8 -0.6 0.9 -1.2M32.8 170.6q-1.3 0.9 0.9 0.3M33.5 171.9q-1.0 0.1 -1.4 -1.6M38.0 172.3q1.0 0.8 1.8 -0.9M46.6 170.3q-1.9 -0.7 1.8 1.8M39.5 170.1q-1.9 1.3 -0.3 1.6M39.1 169.5q-1.2 -1.5 1.6 -0.9M40.9 169.9q0.3 -0.2 -1.3 -1.0M39.0 171.2q-0.6 1.7 1.1 0.9M53.4 171.3q-1.5 1.5 -0.1 -0.7M48.0 169.8q-1.9 0.8 1.7 1.5M37.1 171.2q-0.0 0.7 1.3 -0.6M35.7 171.5q-1.2 0.8 -0.3 1.9M31.2 170.4q0.1 -1.3 -1.5 -1.4M53.5 169.8q-1.5 -1.1 0.5 1.4M52.6 171.0q-0.4 1.8 1.7 -0.6M40.2 172.6q0.2 1.8 1.6 -1.2M33.5 172.2q0.4 -1.6 1.1 1.0M58.4 169.8q-0.7 0.7 1.1 0.9M42.2 171.9q-0.5 1.2 -1.8 1.7M44.0 172.1q-1.9 -0.0 -0.8 0.2M32.3 172.2q1.9 1.8 0.7 -0.3M58.3 169.8q0.4 -1.9 0.8 0.9" stroke="#ddd" stroke-opacity="0.7" stroke-width="1" fill="none" stroke-linecap="round"/>
<path d="M205.7 170.9q-0.9 -1.9 0.4 1.3M205.7 170.4q2.0 1.0 -1.8 -1.5M184.6 170.0q0.3 -1.5 1.6 0.7M190.6 172.5q-1.8 2.0 -2.0 -0.3M181.5 172.6q-1.8 0.8 1.4 0.9M193.0 171.1q1.2 -1.5 -1.4 0.0M204.3 170.8q-0.2 0.6 -0.9 -1.0M195.3 172.3q2.0 -1.1 0.0 0.1M178.9 170.6q-0.3 -1.9 -0.7 -1.5M205.7 171.0q0.9 1.0 1.5 0.8M187.3 171.8q0.4 1.1 -1.2 0.2M183.4 170.6q1.9 -1.5 1.3 1.2M184.6 169.8q0.6 1.1 0.9 1.0M193.7 171.3q0.6 0.4 1.7 0.6M193.0 171.9q-0.3 -0.3 0.3 -1.5M191.2 171.3q-0.3 -0.5 -0.6 -0.4M207.2 169.8q-0.4 -0.2 -1.9 0.9M195.9 170.7q1.5 1.8 -1.0 -1.9M186.9 171.0q1.6 1.3 -0.7 -1.8M185.5 170.3q-0.1 -0.5 0.8 1.2M185.3 172.1q-1.5 0.4 1.5 1.4M207.6 171.8q-1.8 0.9 -0.2 -1.4M180.4 172.1q1.6 1.7 0.7 -0.1M196.7 169.8q-1.0 1.7 0.4 -0.3M200.0 169.9q0.3 -0.7 -1.1 -0.6M191.4 172.1q-0.7 1.8 -1.3 0.9M206.6 170.5q-0.4 0.5 0.4 -1.6M197.3 170.6q0.2 -1.3 -1.9 -1.5" stroke="#ddd" stroke-opacity="0.7" stroke-width="1" fill="none" stroke-linecap="round"/>
<path d="M40.7 174.5q-1.0 0.3 1.6 0.1M39.6 175.0q-0.2 1.6 -1.4 -1.0M35.8 173.1q-0.7 -0.4 -1.5 -1.1M56.4 173.8q1.1 1.6 -0.1 -0.4M44.8 175.4q0.1 0.7 -1.0 1.9M43.3 173.4q-0.6 0.8 -1.5 1.5M46.0 174.2q-0.7 0.7 -1.2 -1.3M48.9 172.5q-1.7 -1.0 0.8 -0.3M37.4 175.1q-1.0 -0.8 0.2 -0.7M39.7 173.6q0.8 1.5 1.2 1.2M52.8 172.9q-1.0 0.1 -1.8 -1.3M58.6 174.4q1.9 1.0 -0.3 -1.0M41.9 172.6q1.4 -1.5 1.9 -1.0M52.7 173.6q-1.6 -1.2 1.6 -0.8M58.0 175.6q-0.9 -0.9 0.6 0.7M33.0 175.7q-0.6 -1.3 -1.8 0.4M45.2 175.5q0.5 0.6 -1.0 -1.3M47.8 173.1q-1.3 -1.0 1.5 -1.6M47.9 174.0q1.6 -0.1 0.2 0.9M31.5 175.2q-1.4 0.4 -1.9 -0.7M57.2 172.9q0.8 -1.6 -0.8 1.4M53.9 175.0q0.6 -0.7 -0.4 -1.4M34.7 173.0q-0.5 0.2 -0.4 -1.5M49.2 173.8q-0.7 1.7 1.2 -1.6M60.1 175.4q1.2 0.3 1.1 0.1M34.1 173.3q-0.7 -0.4 -1.6 1.5M48.7 172.8q1.2 1.5 0.8 1.2M41.0 173.0q-0.5 -0.6 1.0 0.8M35.3 175.2q-0.6 -0.7 -0.2 1.2M47.9 174.9q0.8 -0.4 1.5 -0.6M60.0 174.9q-0.9 1.5 0.2 -0.5M57.9 173.5q1.9 -1.8 -1.7 -1.2M58.2 174.2q-0.4 0.2 0.2 0.2" stroke="#ddd" stroke-opacity="0.7" stroke-width="1" fill="none" stroke-linecap="round"/>
<path d="M176.3 175.4q0.7 0.6 -1.6 -1.4M201.3 174.7q-2.0 -1.1 1.7 -1.8M200.3 173.0q-1.4 0.1 0.1 1.1M204.5 174.9q-0.9 1.8 -0.4 -0.1M200.4 174.7q-0.1 1.2 -0.8 0.9M185.9 175.3q0.3 1.2 0.7 -0.2M191.6 175.6q0.9 -0.0 -2.0 1.6M202.8 173.0q1.3 -0.5 -0.6 0.9M207.8 174.6q-1.7 0.3 -1.8 -1.5M184.4 173.3q1.6 1.4 -0.2 -1.7M192.6 173.9q-0.6 1.9 -0.8 0.4M206.5 174.8q-1.5 -0.6 1.3 -1.7M177.6 173.9q1.8 -1.1 1.9 1.3M180.9 172.6q0.1 -0.8 -0.9 -1.8M196.6 174.3q0.9 0.8 0.4 -0.8M198.1 174.0q-1.8 -0.1 -0.1 -0.9M194.6 173.1q1.4 1.3 1.4 1.5M190.2 173.1q1.9 -1.6 -0.9 1.0M173.4 173.6q-1.6 1.4 -0.6 0.4M185.0 175.4q-1.3 1.9 -0.7 -0.8M193.7 175.1q0.9 1.9 -1.7 0.2M205.8 172.8q0.1 1.8 -0.5 2.0M182.0 172.6q0.2 -0.6 1.8 -0.9M193.3 175.5q-1.0 1.3 1.8 1.5M173.8 173.8q-0.5 0.3 1.8 -1.0M181.4 174.8q1.7 -1.7 0.6 -1.6M197.4 173.6q2.0 1.2 -1.4 -1.7M189.2 175.0q0.1 -0.9 1.9 1.7M191.2 175.6q1.4 -0.4 0.9 0.7M192.7 175.2q-1.9 0.1 -1.2 1.4M193.2 173.0q-1.3 -0.4 1.7 -0.2M193.8 173.9q0.9 -1.5 -2.0 -1.6M182.1 175.1q-1.3 -2.0 1.4 1.5" stroke="#ddd" stroke-opacity="0.7" stroke-width="1" fill="none" stroke-linecap="round"/>
<clipPath id="cm"><path d="M54.5 46H69C71 60 74.5 69 80 75V80H54.5Z"/></clipPath>
<g clip-path="url(#cm)"><path d="M73.7 66.5q-0.3 -1.1 -0.5 -1.9M69.5 78.9q0.8 -1.6 -1.2 -1.7M60.2 61.3q-0.7 -0.1 1.9 -0.7M58.6 60.1q1.2 -1.3 0.8 -0.7M57.1 67.4q-1.6 1.0 -0.2 1.7M71.6 59.0q1.0 -0.1 -1.5 0.4M66.5 69.3q-1.3 -0.1 0.4 -0.3M68.5 76.1q-0.7 -1.1 2.0 0.2M70.6 71.0q2.0 -0.4 -1.0 0.8M78.4 61.2q-1.2 -0.6 0.6 1.5M79.6 49.1q1.0 0.5 -0.8 -0.1M78.2 68.8q-1.9 -0.3 -2.0 -1.7M55.2 64.1q1.4 -0.3 0.5 -1.2M79.0 58.6q-0.9 1.1 0.5 0.2M54.6 55.1q0.0 -1.9 -0.7 1.5M62.1 66.8q1.1 -0.4 1.2 -1.6M67.9 60.7q1.7 1.7 -0.2 2.0M73.3 69.8q1.3 0.7 -1.4 -1.9M70.6 57.2q0.1 -1.9 -0.9 1.7M63.2 58.3q1.6 1.3 -1.7 1.9M54.6 60.6q1.2 1.2 -1.6 0.9M74.7 50.9q1.4 1.3 -1.9 -1.6M67.7 54.6q-0.7 -2.0 1.4 -1.5M79.6 60.5q0.3 1.9 1.1 1.2M74.2 77.1q1.0 -1.1 1.9 -1.7M62.8 58.1q-0.3 -1.5 2.0 -1.8M79.9 63.1q1.1 -0.7 0.8 0.1M65.0 71.2q-0.8 1.4 0.8 1.6M73.3 65.6q-1.7 -1.6 -0.4 0.3M62.4 51.0q0.9 0.5 -1.8 0.9M59.8 70.5q-1.1 0.3 1.3 0.5M64.6 55.7q0.5 1.7 -1.4 1.5M58.9 55.6q-0.8 0.2 0.0 -1.8M66.8 76.6q0.3 1.1 0.3 0.6M63.8 47.0q-1.5 -1.6 1.9 1.2M60.2 68.4q-0.0 -2.0 -1.5 -1.9M61.1 59.4q-1.0 -1.0 -1.2 -2.0M62.8 60.5q-1.9 1.3 -0.6 -0.7M73.3 63.0q1.6 -0.2 -2.0 -1.1M59.7 73.6q0.0 0.2 1.6 -1.5M57.5 57.4q0.5 0.5 0.5 0.7M64.1 49.2q1.5 1.6 -1.9 1.4M56.4 72.0q-1.2 1.4 -1.3 -0.6M75.4 74.1q-1.0 0.3 -0.5 1.7M71.7 54.6q1.2 -1.3 -0.5 -1.6M58.0 56.0q0.1 1.4 0.6 0.5M73.7 53.8q-1.0 -1.4 0.1 -1.3M56.5 58.4q-1.6 -1.1 1.5 0.6M69.6 64.2q0.3 0.4 -1.9 -1.6M56.5 72.1q0.1 -0.6 -1.0 0.4M78.6 59.9q1.4 2.0 -0.3 0.2M74.1 64.5q1.8 1.9 0.9 0.6M73.9 54.0q-1.1 1.1 0.3 -0.2M60.1 70.1q0.8 0.9 -0.0 -0.3M79.7 79.5q0.7 -0.0 1.2 -0.9M78.5 61.5q-0.1 0.1 -0.6 -1.9M62.4 50.4q-1.3 -0.2 -0.1 -1.7M63.4 63.3q-1.5 -1.9 0.1 -0.4M68.8 78.5q-0.7 1.0 -0.9 -0.6M67.1 72.9q-1.2 -0.5 -2.0 -1.5M64.7 59.5q0.3 1.9 1.9 -0.2M70.9 66.3q-1.9 1.8 1.3 -0.7M68.1 65.9q-0.5 0.6 -1.7 1.0M61.7 76.8q1.6 -1.1 -0.5 -0.9M61.4 62.8q-1.2 1.2 1.9 -1.5M56.4 60.5q1.2 -1.5 1.1 0.9M77.2 58.6q1.6 -0.1 1.3 -0.1M61.1 51.9q-1.3 1.5 -0.0 -1.8M69.1 75.1q-0.1 -1.6 -1.4 -0.1M61.2 77.0q0.4 1.4 0.9 0.0M78.8 66.3q-1.3 -1.0 -1.8 1.5M58.0 63.6q-0.1 -1.4 0.3 -0.2M72.8 64.5q1.8 1.7 -0.8 1.3M79.6 49.2q-1.0 1.0 -0.4 -0.2M77.6 51.5q1.6 -0.2 0.0 1.9M57.2 61.8q-1.3 -0.9 0.1 1.1M79.6 47.4q1.0 -0.3 0.4 -1.6M78.1 54.3q-1.8 -1.7 1.5 -1.1M56.4 59.6q0.9 -1.9 1.9 -0.6M67.7 64.5q-0.2 -0.7 -1.6 0.3M75.7 69.5q-1.8 -0.9 -1.5 -1.6M70.7 78.5q-1.5 1.2 1.9 1.5M73.9 62.4q-1.5 -1.1 2.0 0.4M57.8 66.8q-2.0 -2.0 0.5 1.4M79.3 55.5q-1.6 1.2 -0.9 1.5M77.4 65.3q0.4 0.5 0.4 -2.0M74.2 63.8q0.6 -1.7 -1.5 -1.1M57.2 55.2q-0.6 1.9 1.2 0.2M69.3 54.8q-0.5 -0.3 0.3 1.4M69.2 79.1q0.3 -0.7 0.6 -1.3M66.6 70.2q-0.7 0.4 -1.9 0.0M75.4 62.2q-1.0 0.0 0.5 -0.8M68.1 54.3q-0.6 -1.0 1.1 -0.0M75.8 76.3q-1.7 0.5 1.8 -1.0M55.1 74.8q-0.2 0.7 0.7 -0.7M58.6 58.9q0.3 -1.6 1.1 0.7M60.0 55.3q0.3 1.7 -1.9 0.6M68.6 76.8q-0.9 -0.1 -0.1 0.1M78.4 62.9q-1.2 0.5 -2.0 -0.6M67.5 62.5q-1.7 -1.9 1.7 1.0M72.4 66.4q-1.9 -0.2 0.6 0.0M75.8 66.6q1.6 0.2 -1.8 -1.5M58.7 70.0q0.6 1.2 1.7 1.5M56.7 62.1q-1.4 1.5 1.2 -0.6M72.5 47.2q1.8 0.5 -1.7 0.2M76.8 50.4q-0.7 -1.4 0.3 -1.3M66.3 48.5q1.6 1.1 0.6 0.6M56.4 75.2q-0.0 -1.7 0.2 1.7M72.5 52.6q1.6 -0.0 1.9 0.2M62.8 68.5q-0.9 -0.3 0.8 -0.2M72.7 54.4q0.6 -1.7 -1.4 -0.1M61.4 78.6q-0.8 -1.7 -0.9 1.1M66.9 75.3q0.8 0.5 1.1 -1.8M66.8 68.6q0.8 -1.5 0.1 -1.3M62.4 74.7q0.8 -0.0 0.3 0.0M64.3 64.9q-1.8 2.0 -1.9 -0.6M77.7 68.2q-0.9 1.2 -1.4 1.4M71.1 66.7q1.3 0.2 1.0 -0.9M73.8 74.3q-0.6 -1.7 -1.0 -0.4M76.8 69.3q1.5 -1.7 -0.0 0.2M63.6 69.3q-1.0 -1.1 0.1 -0.0M71.6 58.1q1.9 -0.9 1.7 1.6M67.6 50.4q0.0 1.8 -0.6 -1.7M73.9 58.8q-1.8 1.4 -0.9 1.7M76.3 49.2q-0.4 -0.3 1.8 0.6M70.0 64.1q-0.7 -2.0 1.5 1.6M74.4 68.0q-1.7 1.6 0.6 -1.7M63.8 62.4q0.5 -1.8 1.9 -1.2M68.8 71.0q1.9 1.3 -1.4 1.0M74.7 77.8q1.3 1.2 0.9 0.2M70.5 68.7q-0.7 1.4 -1.3 -0.6M74.4 56.4q-1.8 -0.7 2.0 -1.8M56.5 77.9q1.4 0.1 -0.6 -0.4M70.6 61.3q-0.9 0.1 -0.2 1.8M66.7 51.6q1.2 -0.3 -1.4 0.0M56.0 77.4q-1.8 0.6 -1.4 1.5M58.2 55.5q-0.3 -0.3 -0.3 1.0M64.8 63.9q-1.2 -1.5 -0.9 1.8M68.5 58.4q0.7 -0.5 0.9 -1.8M78.1 56.8q0.1 -0.9 -0.3 -0.7M71.6 60.4q-0.2 0.2 0.8 -0.8M72.8 68.2q-1.6 -1.4 -0.3 -1.7M59.2 53.0q1.6 -1.1 0.6 -0.6M60.8 52.9q0.3 -1.0 -1.4 0.7M75.2 69.0q0.6 -0.2 -0.3 0.4M56.8 58.8q0.6 -1.6 1.8 -0.5M74.2 75.1q0.1 -1.0 -0.5 -0.5M59.9 51.2q1.8 1.8 0.7 0.0M76.8 77.7q-1.5 1.9 1.4 -1.9M76.8 67.0q-0.3 -1.4 0.5 -0.3M68.5 55.9q0.3 1.5 -1.5 1.5M62.0 65.7q-1.2 0.6 -0.9 1.3M68.7 57.6q0.1 1.3 -1.7 -0.1M59.7 53.0q-1.1 0.5 -0.8 1.2M55.3 49.7q-1.5 -0.1 0.8 -0.0M78.5 59.7q0.0 -1.8 0.2 -0.3M77.0 65.8q-1.3 1.7 -0.6 -0.9M75.9 59.3q-1.2 -1.9 0.4 0.2M73.3 52.3q-1.9 -1.3 0.3 -1.9M71.2 66.9q0.1 -1.9 2.0 0.6M78.9 62.9q1.3 -0.1 1.4 -1.8M60.0 60.2q-1.1 0.8 -1.7 0.3M58.9 69.4q1.8 -0.8 0.5 0.8M71.9 59.9q1.1 0.4 1.6 1.3M61.2 76.5q-0.6 1.3 1.9 1.8M71.8 74.3q-0.4 1.2 1.2 -0.2M71.2 64.5q-1.9 -0.1 1.5 -1.9M57.0 74.4q-1.1 -1.5 -1.6 1.5M73.7 69.0q0.2 1.8 -0.4 0.4M67.4 64.5q0.8 -1.6 -0.2 -0.4M72.2 77.2q-0.6 -1.6 1.0 0.2M56.9 64.5q-1.3 1.0 1.5 1.5M75.1 62.6q-0.7 0.1 1.4 -1.3M73.0 61.6q-0.4 -0.3 -0.8 1.5M60.2 62.7q0.6 -0.0 0.8 -0.6M54.8 78.3q1.8 -1.2 -0.8 0.2M56.1 53.7q0.1 -1.8 -1.4 1.4M61.4 63.6q1.6 -0.2 -1.3 -0.8M60.4 66.4q0.6 -1.6 -1.5 0.1M68.5 57.1q1.6 0.4 1.0 0.5M59.2 53.0q-1.7 -0.3 0.8 1.2M61.7 62.2q1.0 1.1 1.5 0.2M61.6 67.1q0.1 0.7 -0.5 -0.1M58.8 74.2q1.4 1.9 -1.4 -0.7M63.9 77.9q-1.2 -1.9 -1.9 1.8M73.9 52.2q-1.5 -0.6 1.0 -2.0M56.7 62.3q-0.0 1.9 -0.6 1.0M76.0 52.6q0.3 0.1 1.7 1.6M58.8 57.4q0.5 -0.7 -1.1 -1.2M74.1 65.6q1.4 0.0 1.3 -1.7M70.6 54.7q0.9 0.3 0.8 -0.4M58.1 56.8q0.5 0.2 1.0 -1.9M72.7 57.7q1.0 -1.7 -0.1 -0.1M67.5 55.4q-1.2 -1.1 0.4 -1.0M77.3 58.8q-0.9 0.2 1.5 0.9M54.7 77.3q0.1 -0.0 0.5 -1.5M71.6 56.4q-1.7 1.3 1.6 0.5M77.1 56.9q1.5 -1.7 0.8 1.4M75.8 55.1q-0.1 1.6 1.2 0.7M75.0 79.3q0.9 0.7 1.8 0.3M64.7 63.2q-1.0 1.4 0.0 -1.1M76.1 69.7q0.3 0.7 0.8 0.0M54.7 61.4q-0.1 -1.7 1.9 -1.2M61.0 73.8q1.2 1.5 -1.9 1.2M61.1 77.3q1.8 0.2 -0.5 -0.2M71.9 50.6q-1.6 1.3 -2.0 -0.9M60.9 78.1q0.8 -0.7 0.7 -1.2M67.9 49.5q0.3 0.8 1.3 1.1M63.2 51.2q0.3 -1.5 -0.7 1.0M60.6 62.4q-0.2 -1.5 -1.9 -1.8M77.2 51.2q-0.7 0.2 1.0 1.2M79.8 67.1q-1.0 1.8 -0.5 1.9M62.4 60.7q1.5 0.8 -0.7 0.6M59.1 79.2q1.4 -1.6 0.9 0.0M69.8 72.5q-1.7 -0.1 1.1 0.7M61.4 66.8q0.2 0.4 -0.4 -0.2M77.2 56.2q-1.5 1.4 -0.9 -1.3M77.9 51.1q1.5 1.9 -0.6 1.6M79.8 56.9q0.0 -1.9 -1.7 -1.0M61.0 62.4q-1.5 -0.7 0.7 -1.4M56.8 51.0q1.5 -1.8 -1.6 1.2M75.0 74.4q1.3 -1.7 0.6 -0.8M55.7 78.0q1.0 -1.8 -1.1 1.7M56.9 68.0q0.7 -1.1 -1.4 0.7M66.7 53.9q0.8 0.5 1.5 0.5M56.1 75.8q0.4 -0.0 1.1 0.1M73.8 64.3q-1.1 -2.0 -0.9 0.1M67.8 75.3q0.0 0.3 0.9 -1.2M69.3 62.0q1.5 0.1 0.0 0.8M74.5 69.1q-0.7 -0.6 -1.5 -1.0M67.0 56.6q-0.5 0.8 2.0 0.9M78.1 52.2q-0.5 1.5 0.5 1.8M75.0 57.4q-0.3 -0.6 -1.4 1.2M66.3 70.7q1.1 -1.3 1.6 1.7M63.9 47.2q-1.3 -0.1 -1.2 -0.6M57.9 68.2q0.7 -0.7 -0.4 -1.0M55.1 74.2q-0.8 -0.9 1.0 1.5M72.3 51.8q0.2 -1.8 1.9 0.6M61.7 60.8q0.4 -1.7 1.9 -1.4M79.3 71.3q-1.3 -1.0 1.2 1.0M55.5 64.9q-1.3 1.7 -1.7 -1.2M74.6 56.3q-1.4 -0.5 1.9 -1.4M75.0 50.2q1.2 -0.7 1.2 0.2M55.6 50.2q1.1 -1.2 0.9 0.0M61.6 53.9q-1.4 0.9 1.4 0.8M55.5 62.2q0.9 0.7 -1.0 1.1M59.5 48.4q-2.0 1.4 0.6 0.8M77.4 58.7q1.7 0.6 0.1 0.6M67.6 72.0q0.2 -0.3 -0.0 -1.9M63.0 59.8q1.0 1.5 -1.1 -0.8M66.1 74.5q1.0 1.1 -1.5 0.1M64.4 52.5q0.6 -0.6 1.8 0.4M57.4 65.5q0.7 1.0 -0.4 1.6M69.0 71.5q0.3 0.4 -1.5 2.0M59.3 50.0q0.7 -1.0 0.8 0.9M66.9 72.0q-1.6 1.1 0.6 1.6M54.8 67.3q-0.3 0.7 0.1 -1.7M76.6 49.5q-1.5 1.6 0.0 1.2M78.4 58.1q-1.1 -0.3 -1.2 -1.4M72.5 77.4q-0.3 0.6 0.2 1.8M54.5 60.6q1.2 -1.5 -1.9 -1.5M62.1 64.1q-1.6 0.7 0.1 -1.9M64.8 50.0q2.0 -1.8 -0.1 -0.5M59.1 49.4q1.1 -1.6 0.2 1.8M68.3 58.6q0.4 -1.0 1.9 0.8M65.6 64.1q-1.6 -0.3 -0.5 0.3M79.7 60.0q1.2 0.9 0.0 1.0M64.2 70.1q-1.9 -1.2 -1.2 0.5M59.0 58.4q1.5 -1.6 1.0 -1.9M78.7 77.8q1.8 -0.2 0.5 1.4M76.3 48.1q1.1 -1.4 1.1 0.6M56.6 64.0q-1.3 0.3 0.4 0.7M79.2 55.2q0.7 -0.2 1.3 1.8M65.2 62.2q-0.9 -1.3 -1.5 -1.7M77.4 58.8q1.6 1.6 1.5 0.3M72.6 61.6q-0.8 1.3 -1.0 0.3M55.6 67.7q0.2 1.9 -0.6 -0.3M79.8 58.6q0.1 0.3 1.8 1.8M59.5 72.6q1.7 0.5 -0.1 1.0M72.2 64.8q-1.8 -1.3 -1.5 -0.2M79.5 59.4q-1.8 0.4 -1.5 -0.3M60.3 54.1q-1.9 0.9 0.5 1.7M69.3 62.8q-0.6 0.1 -0.3 -2.0M63.1 79.3q1.2 1.2 -0.6 1.4M67.0 63.2q-1.1 -1.9 1.4 -1.5M67.0 61.7q-0.4 -0.0 1.8 1.7M57.2 71.5q1.5 -1.8 0.1 -1.3M59.4 62.5q-0.9 1.2 2.0 -1.4M63.1 77.2q-0.8 1.4 -1.9 -1.0M57.1 68.9q1.2 -1.8 1.5 1.9M66.8 54.1q0.9 0.3 -1.5 -1.0M57.8 56.3q1.0 -0.1 -1.7 1.7M79.0 78.8q-1.2 0.5 -1.2 -1.0M69.7 63.8q-0.7 0.7 1.1 0.1M78.7 48.6q1.0 -0.3 -0.1 -1.4M75.9 68.8q0.4 1.9 1.8 0.3M75.0 58.0q-1.7 1.7 -1.6 1.7M78.3 68.5q1.0 0.4 1.8 0.4M60.2 49.6q-1.5 0.2 1.0 -0.2M61.3 55.5q1.0 1.3 1.5 0.5M65.6 61.7q1.1 1.5 -0.3 -0.6M62.1 70.1q0.7 1.1 -1.1 -2.0M62.9 79.3q1.0 1.4 0.9 -0.7M58.1 76.6q-0.5 0.1 -0.3 -0.9M67.9 56.6q0.9 0.8 -1.8 0.5M64.6 74.9q-1.9 0.2 -1.9 -1.5M67.8 54.4q-1.9 1.8 0.1 -2.0M77.1 49.3q0.2 1.4 0.6 0.0M70.9 77.6q-1.5 1.3 0.7 1.7M62.6 76.9q1.0 -0.4 1.2 1.9M67.9 72.4q0.3 0.9 -1.8 0.2M63.2 66.7q0.7 1.6 0.9 -0.5M63.9 64.1q-0.9 -0.9 -0.1 1.4M64.5 68.2q0.0 0.9 -1.4 1.9M65.0 47.9q-1.6 1.9 -0.5 0.3M69.5 61.9q-0.7 0.6 -1.9 -1.0M58.9 62.8q0.8 0.1 -0.9 0.3M73.6 67.2q-0.1 1.0 -1.7 0.6M78.4 58.4q0.6 -2.0 1.4 -1.1M75.5 61.5q-0.5 -1.1 -0.2 -0.0M72.2 67.4q1.7 -0.9 -1.8 -0.9M62.0 65.8q1.9 -1.5 -0.5 1.8M60.2 52.6q0.7 1.5 -0.2 -0.9M56.3 47.9q-1.5 -0.3 -1.6 -0.8M63.8 70.6q-0.3 0.6 1.9 1.9M57.9 66.8q-1.4 -1.3 1.5 1.5M77.5 69.7q0.5 -1.9 1.0 -1.7M73.3 72.8q0.9 2.0 -0.7 -2.0M70.3 58.9q1.9 -0.5 -0.7 1.2M60.1 79.4q-0.8 0.9 -0.3 -0.2M79.6 62.2q-0.3 1.2 1.4 -0.4M79.3 71.5q1.7 1.8 0.8 1.3M68.1 59.6q-0.6 -2.0 -2.0 0.1M79.8 57.0q-0.6 1.1 1.7 -1.9M71.7 68.9q1.3 1.0 -0.0 -1.6M66.7 65.3q-0.1 -0.1 1.2 -0.0M73.3 70.9q-0.5 0.7 -0.7 1.1M64.1 76.2q-0.5 -0.6 1.8 1.1M65.6 66.7q1.7 -1.7 -1.9 0.2M77.2 65.6q0.9 1.0 2.0 0.9M65.2 50.8q0.9 -1.1 1.4 1.5M67.2 63.7q-0.2 1.9 -0.5 -0.0M70.5 78.7q1.1 -0.5 1.6 -1.3M69.7 65.3q0.7 -0.5 1.0 -0.8M74.5 63.0q-0.9 -2.0 0.6 2.0M77.3 64.1q1.6 -0.5 0.6 1.3M79.7 59.7q-0.5 -0.3 0.9 1.3M63.8 58.1q-1.8 2.0 -0.4 1.4" stroke="#e8e8e8" stroke-opacity="0.8" stroke-width="1" fill="none" stroke-linecap="round"/></g>
<radialGradient id="sg" cx="0.45" cy="0.35" r="0.55"><stop offset="0" stop-color="#a5a5a5"/><stop offset="0.55" stop-color="#555"/><stop offset="1" stop-color="#151515"/></radialGradient>
<path d="M69.4 46.5C72 62 78 75.5 90 78.6C94 72 97 58 98.6 46.5Z" fill="url(#sg)"/>
<path d="M69.4 46.5C72 62 78 75.5 90 78.6C94 72 97 58 98.6 46.5" stroke="#f2f2f2" stroke-width="1.3" fill="none"/>
<path d="M140.3 59.5q-0.8 3.9 1.3 7.9M143.3 54.9q-1.1 3.5 -1.2 7.0M142.5 61.7q0.6 3.3 -1.6 6.7M111.1 54.3q-1.3 3.7 0.2 7.5M123.0 51.8q-0.6 4.2 1.2 8.4M138.7 54.8q1.4 2.1 0.3 4.2M132.5 62.8q1.6 3.6 -2.5 7.3M146.8 61.0q1.6 3.2 2.0 6.4M133.1 45.2q-0.4 3.9 0.4 7.7M141.7 48.4q-0.8 4.5 -1.2 9.1M112.4 47.8q0.1 2.8 2.2 5.6M117.4 52.5q0.6 3.1 -0.7 6.2M135.8 48.9q0.3 2.1 1.1 4.3M116.0 46.2q-1.7 4.0 2.1 8.0M136.6 49.2q-1.8 3.2 -2.1 6.5M124.0 67.8q1.0 4.7 0.7 9.5M132.6 58.3q-0.0 4.0 -0.5 7.9M142.0 52.8q0.7 3.2 2.3 6.4M123.7 56.3q-1.2 3.2 -0.7 6.4M140.2 49.9q-0.9 3.4 0.4 6.9M139.6 48.0q-1.2 3.5 0.7 6.9M136.1 50.8q-0.8 2.7 -0.9 5.4M144.0 67.7q-0.4 4.4 -0.2 8.7M118.4 57.0q-1.6 4.9 -0.5 9.7M118.2 67.0q-0.1 2.9 -2.2 5.8M136.6 58.4q0.9 4.4 1.2 8.8M120.7 51.5q-1.8 3.8 2.2 7.6M137.7 57.8q-1.7 3.1 0.3 6.2M139.6 48.1q0.7 2.3 -0.2 4.6M140.3 55.7q1.5 4.9 -0.9 9.9M130.9 60.3q1.3 3.4 1.0 6.7M141.3 51.6q0.2 3.5 0.4 7.0M111.6 66.1q-1.4 3.3 1.8 6.7M131.6 64.2q0.5 4.2 2.1 8.4M113.1 53.7q0.5 2.5 -1.4 5.0M112.0 48.5q0.2 2.5 -0.2 5.0M128.2 45.3q-1.0 3.6 -2.0 7.2M113.1 48.9q-1.3 3.2 -0.2 6.4M117.1 64.1q-0.7 4.6 -2.1 9.3M146.7 47.2q1.0 3.9 -0.1 7.9M144.0 48.8q1.6 4.2 2.0 8.3M142.4 56.3q1.4 3.5 -0.6 7.1M120.4 45.8q-1.4 2.6 2.1 5.2M122.4 54.2q0.8 4.9 -0.3 9.8M114.9 54.5q1.8 2.9 -0.4 5.7M147.0 52.0q1.6 2.1 -2.1 4.3M140.2 60.5q1.3 2.9 -0.4 5.7M147.4 59.5q1.7 4.8 -0.6 9.7M136.6 63.9q-1.9 4.0 0.9 7.9M139.2 50.0q-1.7 2.3 0.2 4.6M114.9 67.0q2.0 3.2 1.2 6.5M126.8 49.7q0.4 3.3 1.8 6.6M144.0 53.4q0.7 2.1 0.9 4.1M135.0 65.9q0.5 4.4 1.6 8.9M115.6 69.6q-1.6 4.0 -1.7 8.0M134.7 53.0q-0.9 4.8 -0.1 9.6M129.6 69.4q1.6 2.9 1.1 5.8M132.1 69.6q1.0 4.7 0.2 9.3M112.6 50.7q-1.5 4.0 0.7 7.9M123.8 55.1q1.4 4.5 1.2 8.9M127.5 58.9q1.7 5.0 0.5 9.9M113.9 68.4q-1.5 2.1 0.8 4.3M118.3 64.6q-1.3 4.1 2.0 8.1M147.9 62.1q1.2 4.9 -0.1 9.9M141.5 69.4q-1.7 4.1 -0.6 8.2M137.0 54.5q-0.2 2.5 -1.8 5.0M128.6 47.6q-1.1 4.2 2.2 8.4M115.0 61.4q-1.2 3.9 0.6 7.9M131.3 61.0q-0.1 2.6 1.7 5.1M133.9 51.3q1.5 3.0 -2.2 6.0M128.7 58.3q-2.0 3.3 -2.0 6.6M142.2 56.8q-0.2 2.9 -2.2 5.8M114.0 66.5q-1.2 4.3 -0.9 8.6M113.8 53.3q1.0 3.6 0.0 7.1M142.4 71.0q-1.8 3.7 -1.8 7.4M135.9 48.4q-1.8 4.7 -2.2 9.4M147.8 55.6q0.4 3.7 -1.9 7.3M123.4 54.6q1.1 4.2 1.0 8.4M117.7 57.0q-1.3 4.7 -0.8 9.5M133.8 70.9q0.8 2.1 -0.2 4.2M130.6 66.9q0.4 2.3 -0.9 4.6M138.9 63.6q-1.4 3.2 1.3 6.5M136.9 59.7q1.8 4.2 -1.3 8.5M136.5 66.0q1.6 2.8 -0.9 5.6M146.4 60.1q1.5 4.9 1.4 9.8M124.7 56.9q1.2 3.8 -0.4 7.5M144.3 50.6q-1.4 3.6 -1.6 7.1M121.8 46.2q0.5 3.7 -0.5 7.4M140.5 59.2q-1.7 4.1 -0.9 8.1M111.8 49.2q-1.5 4.5 0.5 9.1M125.0 62.5q1.3 4.6 2.3 9.2M146.7 55.4q1.1 5.0 -1.1 9.9M123.1 58.6q-1.6 4.5 2.0 9.1M135.8 60.4q-0.5 3.2 -0.5 6.4M137.5 56.5q1.5 4.1 -2.1 8.3M111.7 69.5q1.3 2.6 -0.5 5.2M119.3 45.3q0.4 3.3 -2.2 6.6M111.4 52.5q1.0 4.6 -1.2 9.3M125.9 55.8q-0.9 4.1 -0.7 8.3M129.6 51.2q1.0 3.3 0.0 6.6M113.1 54.1q-1.1 3.7 -0.6 7.4M131.7 54.5q1.5 2.5 -2.2 5.1M144.5 47.5q0.2 3.7 -0.5 7.3M134.2 68.0q-1.8 3.0 -1.5 5.9M143.5 60.6q-0.4 4.3 -0.9 8.5M136.5 59.8q-1.4 4.7 -0.8 9.5M136.6 68.6q1.2 3.4 -2.0 6.8M134.7 53.6q-0.8 4.1 -1.6 8.2M121.0 63.8q1.7 4.1 -0.4 8.3M113.4 66.0q0.9 2.8 -0.1 5.5M127.4 45.8q1.0 2.7 -0.2 5.4M143.6 66.0q1.9 3.6 -2.5 7.2M125.8 58.9q1.5 2.2 -1.8 4.3M132.5 52.0q-0.1 3.1 -1.1 6.3M117.3 62.3q-1.7 3.9 2.4 7.8M114.9 50.8q-0.5 2.8 -0.0 5.7M144.4 47.6q0.5 3.7 -1.2 7.4M124.1 56.6q1.1 4.7 -0.1 9.3M113.6 54.3q-0.3 4.5 -0.5 8.9M134.6 46.1q0.7 3.9 -1.9 7.9" stroke="#eee" stroke-opacity="0.75" stroke-width="0.9" fill="none" stroke-linecap="round"/>
<text transform="translate(40.8 113.3) scale(0.43 1)" font-size="40.5" font-weight="bold" fill="#fff" letter-spacing="7.66">ВРЕМЯ</text>
<text transform="translate(129.2 113.3) scale(0.43 1)" font-size="40.5" font-weight="bold" fill="#fff" letter-spacing="9.32">ТЬМЫ</text>
<text transform="translate(58.4 170.1) scale(0.43 1)" font-size="35.5" font-weight="bold" fill="#fff" letter-spacing="7.51">НЕКРОМАНТ</text>
<rect x="117" y="124" width="1.6" height="12" fill="#fff"/>
</g></svg>
<div id="read" class="btn"></div><div id="lib" class="btn"></div><div id="dl" class="btn"></div>
<span class="t" style="left:88.3px;top:209.8px;font-size:15px;letter-spacing:-0.049px;color:#fff;">Читать книгу</span>
<span class="t" style="left:84.8px;top:263px;font-size:14.3px;letter-spacing:-0.083px;color:#333;">В библиотеку</span>
<span class="t" style="left:102.1px;top:311px;font-size:14.3px;letter-spacing:-0.088px;color:#333;">Скачать</span>
<span class="t" style="left:262px;top:67px;font-size:14.2px;letter-spacing:-0.063px;color:#4380b2;">боевое фэнтези, другой мир, зомби, магический мир, магия, мистика, становление</span>
<span class="t" style="left:238.5px;top:88px;font-size:14.2px;letter-spacing:-0.100px;color:#4380b2;">героя, темное фэнтези, фэнтези</span>
<div id="panel" class="abs"></div>
<div class="tab" style="left:238px;width:100px"></div>
<div class="tab" style="left:338px;width:106px"></div>
<div class="tab act" style="left:444px;width:108px"></div>
<div class="tab" style="left:551px;width:136px;border-right:1px solid #dce3e6"></div>
<span class="t" style="left:252.8px;top:137px;font-size:14.3px;letter-spacing:-0.204px;color:#555;">Аннотация</span>
<span class="t" style="left:352.9px;top:137px;font-size:14.3px;letter-spacing:-0.403px;color:#555;">Оглавление</span>
<span class="t" style="left:459.2px;top:137px;font-size:14.3px;letter-spacing:0.144px;color:#555;">Статистика</span>
<span class="t" style="left:566.2px;top:137px;font-size:14.3px;letter-spacing:-0.186px;color:#555;">Доп. материалы</span>
<span class="t" style="left:253px;top:177px;font-size:14.2px;letter-spacing:-0.137px;color:#6b6b6b;">Впервые опубликовано</span>
<span class="t" style="left:446.8px;top:177px;font-size:14.2px;letter-spacing:-0.058px;color:#5e5e5e;">16 сентября 2019</span>
<span class="t" style="left:253px;top:198px;font-size:14.2px;letter-spacing:0.051px;color:#6b6b6b;">Добавили в библиотеку</span>
<span class="t" style="left:446.8px;top:198px;font-size:14.2px;color:#5e5e5e;">94</span>
<span class="t" style="left:253px;top:219px;font-size:14.2px;letter-spacing:0.104px;color:#6b6b6b;">Читают сейчас</span>
<span class="t" style="left:446.8px;top:219px;font-size:14.2px;color:#5e5e5e;">70</span>
<span class="t" style="left:253px;top:240px;font-size:14.2px;letter-spacing:0.053px;color:#6b6b6b;">Прочитали</span>
<span class="t" style="left:446.8px;top:240px;font-size:14.2px;color:#5e5e5e;">12</span>
<span class="t" style="left:253px;top:261px;font-size:14.2px;letter-spacing:-0.330px;color:#6b6b6b;">Скачали</span>
<span class="t" style="left:446.8px;top:261px;font-size:14.2px;color:#5e5e5e;">49</span>
<div id="hr" class="abs"></div>
<div id="period" class="abs"></div>
<span class="t" style="left:284.9px;top:315px;font-size:14.3px;letter-spacing:-0.511px;color:#555;">За неделю</span>
<i class="caret" style="left:359px;top:320.5px;border-top-color:#555"></i>
<div id="chartbox" class="abs"></div>
<svg class="abs" style="left:0;top:0" width="851" height="645" viewBox="0 0 851 645" shape-rendering="auto">
<path d="M319.5 569.5H758.3M319.5 529.5H758.3M319.5 488.5H758.3M319.5 448.5H758.3M319.5 408.5H758.3M319.5 368.5H758.3M319.5 368.5V569.3M382.5 368.5V569.3M444.5 368.5V569.3M507.5 368.5V569.3M570.5 368.5V569.3M632.5 368.5V569.3M695.5 368.5V569.3M758.5 368.5V569.3" stroke="#eeeeee" stroke-width="1" fill="none" shape-rendering="crispEdges"/>
<rect x="325.6" y="452.8" width="50.5" height="116.5" fill="#7fc1df" fill-opacity="0.8" stroke="#6fb9d8" stroke-width="1"/>
<rect x="388.3" y="468.9" width="50.5" height="100.4" fill="#7fc1df" fill-opacity="0.8" stroke="#6fb9d8" stroke-width="1"/>
<rect x="451.0" y="525.1" width="50.5" height="44.2" fill="#7fc1df" fill-opacity="0.8" stroke="#6fb9d8" stroke-width="1"/>
<rect x="513.6" y="529.1" width="50.5" height="40.2" fill="#7fc1df" fill-opacity="0.8" stroke="#6fb9d8" stroke-width="1"/>
<rect x="576.3" y="392.6" width="50.5" height="176.7" fill="#7fc1df" fill-opacity="0.8" stroke="#6fb9d8" stroke-width="1"/>
<rect x="639.0" y="513.1" width="50.5" height="56.2" fill="#7fc1df" fill-opacity="0.8" stroke="#6fb9d8" stroke-width="1"/>
<rect x="701.7" y="509.1" width="50.5" height="60.2" fill="#7fc1df" fill-opacity="0.8" stroke="#6fb9d8" stroke-width="1"/>
<path d="M319.5 569.3H758.3M319.5 569.3v5M444.9 569.3v5M570.2 569.3v5M695.6 569.3v5" stroke="#555" stroke-width="1" fill="none"/>
<clipPath id="cp"><rect x="319.5" y="358.5" width="438.8" height="210.8"/></clipPath>
<path d="M350.2 550.9C360.6 549.8 391.9 543.6 412.8 544.0C433.8 544.4 454.9 550.4 475.9 553.0C496.9 555.6 519.0 588.7 538.8 559.7C559.6 534.2 579.9 403.8 600.8 399.8C621.6 395.8 642.9 510.8 663.9 535.9C684.9 561.0 716.5 548.1 727.0 550.5" stroke="#ffd633" stroke-width="1.2" fill="none" clip-path="url(#cp)"/>
<circle cx="350.2" cy="550.9" r="3.5" fill="#fff" stroke="#ffcf0d" stroke-width="2.4"/>
<circle cx="412.8" cy="544.0" r="3.5" fill="#fff" stroke="#ffcf0d" stroke-width="2.4"/>
<circle cx="475.9" cy="553.0" r="3.5" fill="#fff" stroke="#ffcf0d" stroke-width="2.4"/>
<circle cx="538.8" cy="559.7" r="3.5" fill="#fff" stroke="#ffcf0d" stroke-width="2.4"/>
<circle cx="600.8" cy="399.8" r="3.5" fill="#fff" stroke="#ffcf0d" stroke-width="2.4"/>
<circle cx="663.9" cy="535.9" r="3.5" fill="#fff" stroke="#ffcf0d" stroke-width="2.4"/>
<circle cx="727.0" cy="550.5" r="3.5" fill="#fff" stroke="#ffcf0d" stroke-width="2.4"/>
<text x="306.3" y="573.5" font-size="11.5" text-anchor="end" textLength="5.8" lengthAdjust="spacingAndGlyphs" fill="#000">0</text>
<text x="306.3" y="533.3" font-size="11.5" text-anchor="end" textLength="12.8" lengthAdjust="spacingAndGlyphs" fill="#000">10</text>
<text x="306.3" y="493.2" font-size="11.5" text-anchor="end" textLength="12.8" lengthAdjust="spacingAndGlyphs" fill="#000">20</text>
<text x="306.3" y="453.0" font-size="11.5" text-anchor="end" textLength="12.8" lengthAdjust="spacingAndGlyphs" fill="#000">30</text>
<text x="306.3" y="412.9" font-size="11.5" text-anchor="end" textLength="12.8" lengthAdjust="spacingAndGlyphs" fill="#000">40</text>
<text x="306.3" y="372.7" font-size="11.5" text-anchor="end" textLength="12.8" lengthAdjust="spacingAndGlyphs" fill="#000">50</text>
<text x="768.3" y="573.5" font-size="11.5" text-anchor="start" textLength="6.4" lengthAdjust="spacingAndGlyphs" fill="#000">0</text>
<text x="768.3" y="523.3" font-size="11.5" text-anchor="start" textLength="6.4" lengthAdjust="spacingAndGlyphs" fill="#000">1</text>
<text x="768.3" y="473.1" font-size="11.5" text-anchor="start" textLength="6.4" lengthAdjust="spacingAndGlyphs" fill="#000">2</text>
<text x="768.3" y="422.9" font-size="11.5" text-anchor="start" textLength="6.4" lengthAdjust="spacingAndGlyphs" fill="#000">3</text>
<text x="768.3" y="372.7" font-size="11.5" text-anchor="start" textLength="6.4" lengthAdjust="spacingAndGlyphs" fill="#000">4</text>
<text x="321.9" y="588.6" font-size="11.5" text-anchor="start" textLength="39.5" lengthAdjust="spacingAndGlyphs" fill="#000">Янв 24</text>
<text x="447.3" y="588.6" font-size="11.5" text-anchor="start" textLength="39.5" lengthAdjust="spacingAndGlyphs" fill="#000">Янв 26</text>
<text x="572.6" y="588.6" font-size="11.5" text-anchor="start" textLength="39.5" lengthAdjust="spacingAndGlyphs" fill="#000">Янв 28</text>
<text x="698.0" y="588.6" font-size="11.5" text-anchor="start" textLength="39.5" lengthAdjust="spacingAndGlyphs" fill="#000">Янв 30</text>
<text x="0.0" y="0.0" font-size="12.5" text-anchor="middle" textLength="164.5" lengthAdjust="spacingAndGlyphs" fill="#000" font-weight="bold" transform="translate(281.2 469.8) rotate(-90)">Количество просмотров</text>
<text x="0.0" y="0.0" font-size="12.5" text-anchor="middle" textLength="138" lengthAdjust="spacingAndGlyphs" fill="#000" font-weight="bold" transform="translate(801.6 469.6) rotate(-90)">Время чтения, часы</text>
<rect x="410.5" y="611.5" width="32" height="16" fill="#7fc1df" fill-opacity="0.8" stroke="#6fb9d8"/>
<path d="M544.5 619H576.5" stroke="#ffd633" stroke-width="1.2"/>
<circle cx="561" cy="619" r="3.5" fill="#fff" stroke="#ffcf0d" stroke-width="2.4"/>
</svg>
<svg class="abs" style="left:0;top:0" width="851" height="645" viewBox="0 0 851 645">
<path d="M248.5 65.7H255.7V72.8L248 80L241.5 73.2Z" fill="#555"/>
<circle cx="251.6" cy="69.9" r="1.35" fill="#fff"/>
<path d="M246.2 65.8L238.5 73.2L244.9 79.8" stroke="#555" stroke-width="1.5" fill="none"/>
<path d="M62 213.2V225.4Q67 224.6 71.5 227.2Q76 224.6 81.1 225.4V213.2" stroke="#fff" stroke-width="1.9" fill="none" stroke-linejoin="round"/>
<path d="M61.2 213Q67 212 71.5 214.6Q76 212 81.9 213" stroke="#fff" stroke-width="1.2" fill="none"/>
<path d="M71.5 214.6V227" stroke="#fff" stroke-width="1.5" fill="none"/>
<path d="M64.5 269.2H76.5M70.4 263.3V275" stroke="#333" stroke-width="1.5" fill="none"/>
<path d="M89.1 311V319.3M85.4 316L89.1 319.6L92.8 316" stroke="#333" stroke-width="1.5" fill="none"/>
<path d="M83.5 319.2V321.3Q83.5 322.4 84.6 322.4H93.6Q94.7 322.4 94.7 321.3V319.2" stroke="#333" stroke-width="1.7" fill="none"/>
<path d="M97.4 363.1L83.6 370.2L97.4 377.2" stroke="#607489" stroke-width="1.6" fill="none"/>
<circle cx="97.4" cy="363.1" r="3.1" fill="#607489"/>
<circle cx="83.6" cy="370.2" r="3.1" fill="#607489"/>
<circle cx="97.4" cy="377.2" r="3.1" fill="#607489"/>
<circle cx="137.8" cy="370.6" r="1.95" fill="none" stroke="#607489" stroke-width="1.4"/>
<circle cx="144.5" cy="370.6" r="1.95" fill="none" stroke="#607489" stroke-width="1.4"/>
<circle cx="151.3" cy="370.6" r="1.95" fill="none" stroke="#607489" stroke-width="1.4"/>
<rect x="264.5" y="315" width="12.3" height="12.5" fill="#fff" stroke="#555" stroke-width="1"/>
<rect x="264" y="314.6" width="13.3" height="3" fill="#555"/>
<rect x="265" y="313.7" width="2" height="1.5" fill="#555"/><rect x="274.3" y="313.7" width="2" height="1.5" fill="#555"/><rect x="268" y="314" width="5.3" height="1" fill="#555"/>
<path d="M268.1 318.85h1.6v2.1h-1.6zM270.9 318.85h1.6v2.1h-1.6zM273.7 318.85h1.6v2.1h-1.6zM265.3 321.35h1.6v2.1h-1.6zM268.1 321.35h1.6v2.1h-1.6zM270.9 321.35h1.6v2.1h-1.6zM273.7 321.35h1.6v2.1h-1.6zM265.3 323.85h1.6v2.1h-1.6zM268.1 323.85h1.6v2.1h-1.6zM270.9 323.85h1.6v2.1h-1.6z" fill="#707070"/>
</svg>
</body>
</html>
